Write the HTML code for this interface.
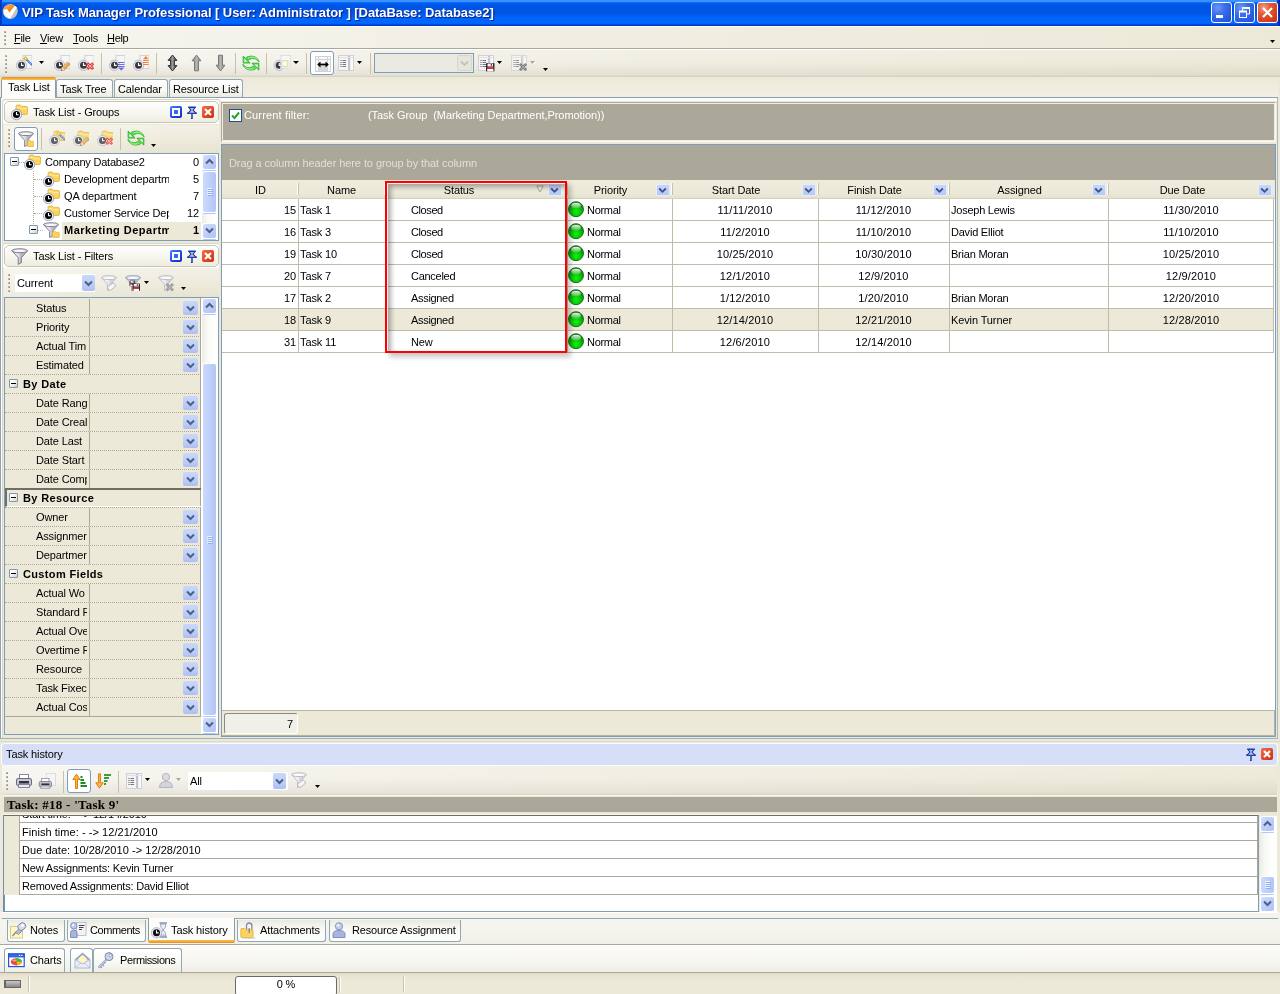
<!DOCTYPE html>
<html><head><meta charset="utf-8"><title>VIP Task Manager Professional</title>
<style>
html,body{margin:0;padding:0}
body{width:1280px;height:994px;overflow:hidden;background:#ECE9D8;font-family:"Liberation Sans",sans-serif;font-size:11px;color:#000;position:relative;letter-spacing:-.12px}
.a{position:absolute;box-sizing:border-box}
.t{position:absolute;white-space:pre;line-height:13px;height:13px}
.b{font-weight:bold;letter-spacing:.35px}
u{text-decoration:underline}
#app{position:absolute;left:0;top:0;width:1280px;height:994px;will-change:transform}
</style></head>
<body>
<div id="app">
<div class="a " style="left:0px;top:0px;width:1280px;height:26px;background:linear-gradient(180deg,#3b92ff 0px,#3b92ff 1.5px,#0069ff 2.6px,#0259ea 4px,#0055e2 6px,#0055e4 13px,#0066fc 18px,#0068ff 23px,#005cf0 24px,#003ad0 25px,#0036c8 26px)"></div>
<div class="a " style="left:0px;top:0px;width:2px;height:26px;background:linear-gradient(90deg,#0030b0,#0048d8)"></div>
<div class="a " style="left:1277px;top:0px;width:3px;height:26px;background:linear-gradient(90deg,#0048d8,#001c98)"></div>
<svg class="a" style="left:2px;top:3px" width="17" height="17" viewBox="0 0 17 17"><defs><linearGradient id="og" x1="0" y1="0" x2="1" y2="1"><stop offset="0" stop-color="#ffffff"/><stop offset=".55" stop-color="#f0f0f0"/><stop offset="1" stop-color="#a8a8a8"/></linearGradient><linearGradient id="oo" x1="0" y1="0" x2=".6" y2="1"><stop offset="0" stop-color="#ffb050"/><stop offset="1" stop-color="#e87808"/></linearGradient></defs><circle cx="8.200" cy="8.500" r="7.100" fill="url(#og)" stroke="#e8c8a0" stroke-width=".6"/><path d="M1.500 6.500q1.200-4.300 6-5.100 3.400-.3 5.400 1.800l-5.600 7.200-2.300-3.600z" fill="url(#oo)"/><path d="M1.800 7.400l3.100-1.600 2.500 3.600 5.500-6.600 2.200 2-6.900 10.600h-1.400z" fill="#fff"/><path d="M8.200 15.400l6.900-10.600.4 3.500-5 7.100z" fill="#c4c4c4"/></svg>
<div class="t" style="left:22px;top:5px;font-size:13px;font-weight:bold;color:#fff;line-height:16px;height:16px;text-shadow:1px 1px 1px #0a1c80;letter-spacing:-.075px" id="title">VIP Task Manager Professional [ User: Administrator ] [DataBase: Database2]</div>
<div class="a " style="left:1211px;top:2px;width:21px;height:21px;background:radial-gradient(circle at 30% 25%,#6a98f8 0%,#3c70ec 35%,#2a5ce0 70%,#2450d0 100%);border:1px solid #fff;border-radius:3px"></div>
<div class="a " style="left:1216px;top:15px;width:7px;height:3px;background:#fff"></div>
<div class="a " style="left:1234px;top:2px;width:21px;height:21px;background:radial-gradient(circle at 30% 25%,#6a98f8 0%,#3c70ec 35%,#2a5ce0 70%,#2450d0 100%);border:1px solid #fff;border-radius:3px"></div>
<svg class="a" style="left:1234px;top:2px" width="21" height="21" viewBox="0 0 21 21"><g fill="none" stroke="#fff"><path d="M8.5 8.5v-2.5h7v6h-2.5" stroke-width="1"/><path d="M8 6h8" stroke-width="2"/><rect x="5.5" y="9.5" width="7" height="6" stroke-width="1"/><path d="M5 9.5h8" stroke-width="2"/></g></svg>
<div class="a " style="left:1257px;top:2px;width:21px;height:21px;background:radial-gradient(circle at 30% 25%,#f0a080 0%,#e0583a 35%,#d8401c 70%,#c03010 100%);border:1px solid #fff;border-radius:3px"></div>
<svg class="a" style="left:1257px;top:2px" width="21" height="21" viewBox="0 0 21 21"><path d="M6 6l9 9M15 6l-9 9" stroke="#fff" stroke-width="2.2" stroke-linecap="butt"/></svg>
<div class="a " style="left:0px;top:26px;width:1280px;height:22px;background:linear-gradient(90deg,#f6f5ef 0%,#f1efe4 40%,#ece9d8 100%)"></div>
<div class="a " style="left:0px;top:26px;width:1280px;height:1px;background:#fffdf2"></div>
<div class="a " style="left:0px;top:48px;width:1280px;height:1px;background:#aca899"></div>
<div class="a " style="left:0px;top:49px;width:1280px;height:1px;background:#fff"></div>
<div class="a " style="left:4px;top:31px;width:2px;height:2px;background:#b8b4a0"></div>
<div class="a " style="left:5px;top:32px;width:1px;height:1px;background:#8c8874"></div>
<div class="a " style="left:4px;top:35px;width:2px;height:2px;background:#b8b4a0"></div>
<div class="a " style="left:5px;top:36px;width:1px;height:1px;background:#8c8874"></div>
<div class="a " style="left:4px;top:39px;width:2px;height:2px;background:#b8b4a0"></div>
<div class="a " style="left:5px;top:40px;width:1px;height:1px;background:#8c8874"></div>
<div class="a " style="left:4px;top:43px;width:2px;height:2px;background:#b8b4a0"></div>
<div class="a " style="left:5px;top:44px;width:1px;height:1px;background:#8c8874"></div>
<div class="t " style="left:14px;top:32px;letter-spacing:-0.3px;"><u>F</u>ile</div>
<div class="t " style="left:40px;top:32px;"><u>V</u>iew</div>
<div class="t " style="left:73px;top:32px;"><u>T</u>ools</div>
<div class="t " style="left:107px;top:32px;letter-spacing:-0.3px;"><u>H</u>elp</div>
<svg class="a" style="left:1270px;top:40px" width="5" height="3" viewBox="0 0 5 3"><path d="M0 0h5l-2.500 3z" fill="#000"/></svg>
<div class="a " style="left:0px;top:50px;width:1280px;height:27px;background:linear-gradient(180deg,rgba(255,255,255,.12) 0%,rgba(255,255,255,0) 45%,rgba(160,155,130,.16) 92%,rgba(160,155,130,.38) 100%),linear-gradient(90deg,#f6f5f0 0%,#f2f0e6 35%,#ece9d8 100%)"></div>
<div class="a " style="left:5px;top:55px;width:2px;height:2px;background:#b8b4a0"></div>
<div class="a " style="left:6px;top:56px;width:1px;height:1px;background:#8c8874"></div>
<div class="a " style="left:5px;top:59px;width:2px;height:2px;background:#b8b4a0"></div>
<div class="a " style="left:6px;top:60px;width:1px;height:1px;background:#8c8874"></div>
<div class="a " style="left:5px;top:63px;width:2px;height:2px;background:#b8b4a0"></div>
<div class="a " style="left:6px;top:64px;width:1px;height:1px;background:#8c8874"></div>
<div class="a " style="left:5px;top:67px;width:2px;height:2px;background:#b8b4a0"></div>
<div class="a " style="left:6px;top:68px;width:1px;height:1px;background:#8c8874"></div>
<div class="a " style="left:5px;top:71px;width:2px;height:2px;background:#b8b4a0"></div>
<div class="a " style="left:6px;top:72px;width:1px;height:1px;background:#8c8874"></div>
<svg class="a" style="left:16px;top:55px" width="16" height="16" viewBox="0 0 16 16"><rect x="7.5" y="1.0" width="9" height="13" fill="#dcdce0"/><rect x="7" y="0.5" width="9" height="13" fill="#f6f6f7" stroke="#d2d2da" stroke-width="1"/><circle cx="5.5" cy="10.3" r="5.2" fill="#e8e8f2" stroke="#b0b0c6" stroke-width=".8"/><circle cx="5.5" cy="10.3" r="3.5" fill="#38383c"/><path d="M5.5 7.800000000000001V10.4H7.7" stroke="#fff" stroke-width="1.1" fill="none"/><path d="M11 5l4.600 4.600" stroke="#3c78e0" stroke-width="1.900" stroke-linecap="round"/><path d="M11.400 5.400l3.800 3.800" stroke="#a8c8f8" stroke-width=".6"/><path d="M9.500 1.200v4.600M7.200 3.500h4.600M7.900 1.900l3.200 3.200M11.100 1.900l-3.200 3.200" stroke="#e0b010" stroke-width="1"/><rect x="8.700" y="2.700" width="1.600" height="1.600" fill="#fff8c0"/></svg>
<svg class="a" style="left:39px;top:61px" width="5" height="3" viewBox="0 0 5 3"><path d="M0 0h5l-2.500 3z" fill="#000"/></svg>
<svg class="a" style="left:54px;top:55px" width="16" height="16" viewBox="0 0 16 16"><rect x="7.5" y="1.0" width="9" height="13" fill="#dcdce0"/><rect x="7" y="0.5" width="9" height="13" fill="#f6f6f7" stroke="#d2d2da" stroke-width="1"/><circle cx="5.5" cy="10.3" r="5.2" fill="#e8e8f2" stroke="#b0b0c6" stroke-width=".8"/><circle cx="5.5" cy="10.3" r="3.5" fill="#38383c"/><path d="M5.5 7.800000000000001V10.4H7.7" stroke="#fff" stroke-width="1.1" fill="none"/><path d="M7.300 15.600l.9-3.300 5.400-5.400 2.400 2.400-5.400 5.400z" fill="#e2aa58" stroke="#b07828" stroke-width=".7"/><path d="M8.900 12.500l5.200-5.200" stroke="#f4d49c" stroke-width=".9"/><path d="M7.300 15.600l.9-3.300 2.400 2.400z" fill="#f6e4c4"/><path d="M7.300 15.600l.4-1.400 1 1z" fill="#222"/></svg>
<svg class="a" style="left:78px;top:55px" width="16" height="16" viewBox="0 0 16 16"><rect x="7.5" y="1.0" width="9" height="13" fill="#dcdce0"/><rect x="7" y="0.5" width="9" height="13" fill="#f6f6f7" stroke="#d2d2da" stroke-width="1"/><circle cx="5.5" cy="10.3" r="5.2" fill="#e8e8f2" stroke="#b0b0c6" stroke-width=".8"/><circle cx="5.5" cy="10.3" r="3.5" fill="#38383c"/><path d="M5.5 7.800000000000001V10.4H7.7" stroke="#fff" stroke-width="1.1" fill="none"/><path d="M9.300 8.300l5.800 5.800M15.100 8.300l-5.800 5.800" stroke="#e83a30" stroke-width="2.800"/><path d="M10.200 9.200l4 4M14.200 9.200l-4 4" stroke="#ffd8d4" stroke-width=".9"/></svg>
<div class="a " style="left:101px;top:53px;width:1px;height:21px;background:#c5c2a8"></div>
<svg class="a" style="left:109px;top:55px" width="16" height="16" viewBox="0 0 16 16"><rect x="7.5" y="1.0" width="9" height="13" fill="#dcdce0"/><rect x="7" y="0.5" width="9" height="13" fill="#f6f6f7" stroke="#d2d2da" stroke-width="1"/><circle cx="5.5" cy="10.3" r="5.2" fill="#e8e8f2" stroke="#b0b0c6" stroke-width=".8"/><circle cx="5.5" cy="10.3" r="3.5" fill="#38383c"/><path d="M5.5 7.800000000000001V10.4H7.7" stroke="#fff" stroke-width="1.1" fill="none"/><path d="M9 7.500h6.500M9 9.500h6.500M9 11.500h6.500" stroke="#6c6ce8" stroke-width="1"/><path d="M9.500 12.500h5.500l-2.750 3.200z" fill="#6c6ce8"/></svg>
<svg class="a" style="left:133px;top:55px" width="16" height="16" viewBox="0 0 16 16"><rect x="7.5" y="1.0" width="9" height="13" fill="#dcdce0"/><rect x="7" y="0.5" width="9" height="13" fill="#f6f6f7" stroke="#d2d2da" stroke-width="1"/><circle cx="5.5" cy="10.3" r="5.2" fill="#e8e8f2" stroke="#b0b0c6" stroke-width=".8"/><circle cx="5.5" cy="10.3" r="3.5" fill="#38383c"/><path d="M5.5 7.800000000000001V10.4H7.7" stroke="#fff" stroke-width="1.1" fill="none"/><path d="M10 4.300h5.600l-2.800-3.300z" fill="#f4823a"/><path d="M10 5.500h5.600M10 7.500h5.600M10 9.500h5.600" stroke="#f4823a" stroke-width="1"/></svg>
<div class="a " style="left:156px;top:53px;width:1px;height:21px;background:#c5c2a8"></div>
<svg width="0" height="0" style="position:absolute"><defs><linearGradient id="ad" x1="0" x2="1"><stop offset="0" stop-color="#3a3a3a"/><stop offset=".5" stop-color="#9a9a9a"/><stop offset="1" stop-color="#3a3a3a"/></linearGradient><linearGradient id="ag" x1="0" x2="1"><stop offset="0" stop-color="#8a8a8a"/><stop offset=".5" stop-color="#b4b4b4"/><stop offset="1" stop-color="#8a8a8a"/></linearGradient></defs></svg>
<svg class="a" style="left:166px;top:54px" width="13" height="18" viewBox="0 0 13 18"><path d="M6.500 1l4.400 5.400h-2.500v5.200h2.500L6.500 17 2.100 11.600h2.500V6.400H2.100z" fill="url(#ad)" stroke="#1e1e1e" stroke-width=".9" stroke-linejoin="round"/></svg>
<svg class="a" style="left:190px;top:54px" width="13" height="18" viewBox="0 0 13 18"><path d="M6.500 1l4.400 5.800h-2.400v10H4.500v-10H2.100z" fill="url(#ag)" stroke="#6e6e6e" stroke-width=".9" stroke-linejoin="round"/></svg>
<svg class="a" style="left:214px;top:54px" width="13" height="18" viewBox="0 0 13 18"><path d="M6.500 17l4.400-5.800h-2.400v-10H4.500v10H2.100z" fill="url(#ag)" stroke="#6e6e6e" stroke-width=".9" stroke-linejoin="round"/></svg>
<div class="a " style="left:235px;top:53px;width:1px;height:21px;background:#c5c2a8"></div>
<svg class="a" style="left:242px;top:54px" width="18" height="18" viewBox="0 0 17 17"><g transform="translate(.5 .6)"><path d="M15.700 7C14.600 2.300 9 -.4 3.400 2.700L5.600 5.300C9 2.600 13.200 3.400 15.700 7z" fill="#58dc4c" stroke="#3aae3a" stroke-width=".8" stroke-linejoin="round"/><path d="M5.400 3.300C8.600 1.600 12 2.200 14 4.400" stroke="#a4ff8c" stroke-width=".9" fill="none"/><path d="M.6 1.400V7.900H7.200z" fill="#58dc4c" stroke="#3aae3a" stroke-width=".9" stroke-linejoin="round"/><path d="M1.700 3.800V6.800H4.700z" fill="#f0fff0"/><g transform="rotate(180 8 8)"><path d="M15.700 7C14.600 2.300 9 -.4 3.400 2.700L5.600 5.300C9 2.600 13.200 3.400 15.700 7z" fill="#58dc4c" stroke="#3aae3a" stroke-width=".8" stroke-linejoin="round"/><path d="M5.400 3.300C8.600 1.600 12 2.200 14 4.400" stroke="#a4ff8c" stroke-width=".9" fill="none"/><path d="M.6 1.400V7.900H7.200z" fill="#58dc4c" stroke="#3aae3a" stroke-width=".9" stroke-linejoin="round"/><path d="M1.700 3.800V6.800H4.700z" fill="#f0fff0"/></g></g></svg>
<div class="a " style="left:266px;top:53px;width:1px;height:21px;background:#c5c2a8"></div>
<svg class="a" style="left:273px;top:55px" width="18" height="16" viewBox="0 0 18 16"><circle cx="6.2" cy="10.3" r="5.2" fill="#e8e8f2" stroke="#b0b0c6" stroke-width=".8"/><circle cx="6.2" cy="10.3" r="3.5" fill="#38383c"/><path d="M6.2 7.800000000000001V10.4H8.4" stroke="#fff" stroke-width="1.1" fill="none"/><rect x="7.800" y=".5" width="9.500" height="13" fill="#f6f6f7" stroke="#dedee4" stroke-width="1"/><rect x="8.800" y="5.700" width="6" height="6" fill="#fffbd8" stroke="#d8d4b8" stroke-width="1"/></svg>
<svg class="a" style="left:293px;top:61px" width="6" height="3" viewBox="0 0 6 3"><path d="M0 0h6l-3 3z" fill="#000"/></svg>
<div class="a " style="left:306px;top:53px;width:1px;height:21px;background:#c5c2a8"></div>
<div class="a " style="left:310px;top:51px;width:24px;height:24px;background:#fff;border:1px solid #7f9db9;border-radius:3px"></div>
<svg class="a" style="left:314px;top:55px" width="17" height="17" viewBox="0 0 17 17"><rect x="1.500" y="1.500" width="15" height="15" fill="#fafafb" stroke="#d0d0d6"/><rect x="5" y="8" width="8" height="8" fill="#d8d8dc"/><path d="M1.500 4.500h15M4.500 1.500v15M13.500 1.500v15" stroke="#d0d0d6"/><path d="M4.500 9.500h9" stroke="#000" stroke-width="1.600"/><path d="M3.200 9.500l3.300-3v6zM14.800 9.500l-3.300-3v6z" fill="#000"/></svg>
<svg class="a" style="left:338px;top:55px" width="16" height="16" viewBox="0 0 16 16"><rect x=".5" y=".5" width="15" height="15" fill="#f4f4f6" stroke="#d0d0d6"/><rect x="10" y="1" width="2.500" height="14" fill="#c4c4cc"/><rect x="12.500" y="1" width="2.500" height="14" fill="#fbfbfc"/><path d="M1 2.500h14" stroke="#e0e0e6"/><path d="M2.500 5.500h1M2.500 7.500h1M2.500 9.500h1M2.500 11.500h1" stroke="#555"/><path d="M4.500 5.500h3.500M4.500 7.500h3.500M4.500 9.500h3.500M4.500 11.500h3.500" stroke="#777"/></svg>
<svg class="a" style="left:357px;top:61px" width="5" height="3" viewBox="0 0 5 3"><path d="M0 0h5l-2.500 3z" fill="#000"/></svg>
<div class="a " style="left:370px;top:53px;width:1px;height:21px;background:#c5c2a8"></div>
<div class="a " style="left:374px;top:53px;width:100px;height:20px;background:#ebeae2;border:1px solid #7f9db9"></div>
<div class="a " style="left:457px;top:55px;width:15px;height:16px;background:#e6e5dc;border:1px solid #d8d6cc;border-radius:2px"></div>
<svg class="a" style="left:460px;top:60px" width="9" height="7" viewBox="0 0 9 7"><path d="M1 1.500l3.500 3.500 3.500-3.500" stroke="#c4c2b6" stroke-width="1.800" fill="none"/></svg>
<svg class="a" style="left:478px;top:55px" width="17" height="17" viewBox="0 0 17 17"><rect x=".5" y=".5" width="15" height="15" fill="#f4f4f6" stroke="#d0d0d6"/><rect x="10" y="1" width="2.500" height="14" fill="#c4c4cc"/><rect x="12.500" y="1" width="2.500" height="14" fill="#fbfbfc"/><path d="M1 2.500h14" stroke="#e0e0e6"/><path d="M2.500 5.500h1M2.500 7.500h1M2.500 9.500h1M2.500 11.500h1" stroke="#555"/><path d="M4.500 5.500h3.500M4.500 7.500h3.500M4.500 9.500h3.500M4.500 11.500h3.500" stroke="#777"/><rect x="8" y="8" width="8.500" height="8.500" rx=".8" fill="#2c2c30"/><rect x="9.500" y="8.500" width="5.500" height="3" fill="#f4f4f8"/><rect x="12.800" y="8.900" width="1.200" height="2" fill="#445"/><rect x="9.200" y="12" width="6.200" height="2" fill="#e83030"/><rect x="9.200" y="14" width="6.200" height="2.500" fill="#fff"/></svg>
<svg class="a" style="left:497px;top:61px" width="5" height="3" viewBox="0 0 5 3"><path d="M0 0h5l-2.500 3z" fill="#000"/></svg>
<svg class="a" style="left:511px;top:55px" width="17" height="17" viewBox="0 0 17 17"><g opacity=".75"><rect x=".5" y=".5" width="15" height="15" fill="#f4f4f6" stroke="#d0d0d6"/><rect x="10" y="1" width="2.500" height="14" fill="#c4c4cc"/><rect x="12.500" y="1" width="2.500" height="14" fill="#fbfbfc"/><path d="M1 2.500h14" stroke="#e0e0e6"/><path d="M2.500 5.500h1M2.500 7.500h1M2.500 9.500h1M2.500 11.500h1" stroke="#555"/><path d="M4.500 5.500h3.500M4.500 7.500h3.500M4.500 9.500h3.500M4.500 11.500h3.500" stroke="#777"/></g><path d="M8.800 8.800l6.400 6.400M15.200 8.800l-6.400 6.400" stroke="#808084" stroke-width="2.600"/><path d="M9.800 9.800l4.400 4.400M14.200 9.800l-4.400 4.400" stroke="#b4b4b8" stroke-width=".8"/></svg>
<svg class="a" style="left:530px;top:61px" width="6" height="4" viewBox="0 0 6 4"><path d="M1 1h5l-2.500 3z" fill="#fff"/><path d="M0 0h5l-2.500 3z" fill="#aca899"/></svg>
<svg class="a" style="left:543px;top:68px" width="5" height="3" viewBox="0 0 5 3"><path d="M0 0h5l-2.500 3z" fill="#000"/></svg>
<div class="a " style="left:0px;top:77px;width:1280px;height:21px;background:linear-gradient(180deg,#ece9d8,#f2f0e6)"></div>
<div class="a " style="left:0px;top:97px;width:1278px;height:1px;background:#8ca0b0"></div>
<div class="a " style="left:0px;top:98px;width:1280px;height:3px;background:#fbfbf9"></div>
<div class="a " style="left:56px;top:79px;width:57px;height:18px;background:linear-gradient(180deg,#ffffff 0%,#f8f8f4 60%,#ebeae0 100%);border:1px solid #91a7b4;border-bottom:none;border-radius:3px 3px 0 0"></div>
<div class="t " style="left:60px;top:83px;">Task Tree</div>
<div class="a " style="left:114px;top:79px;width:54px;height:18px;background:linear-gradient(180deg,#ffffff 0%,#f8f8f4 60%,#ebeae0 100%);border:1px solid #91a7b4;border-bottom:none;border-radius:3px 3px 0 0"></div>
<div class="t " style="left:118px;top:83px;">Calendar</div>
<div class="a " style="left:169px;top:79px;width:74px;height:18px;background:linear-gradient(180deg,#ffffff 0%,#f8f8f4 60%,#ebeae0 100%);border:1px solid #91a7b4;border-bottom:none;border-radius:3px 3px 0 0"></div>
<div class="t " style="left:173px;top:83px;">Resource List</div>
<div class="a " style="left:1px;top:77px;width:55px;height:21px;background:#fcfcfa;border:1px solid #919b9c;border-bottom:none;border-radius:3px 3px 0 0"></div>
<div class="a " style="left:1px;top:77px;width:55px;height:3px;background:linear-gradient(180deg,#e68b2c,#ffc73c);border-radius:3px 3px 0 0"></div>
<div class="t " style="left:8px;top:81px;">Task List</div>
<div class="a " style="left:0px;top:101px;width:222px;height:640px;background:#ece9d8"></div>
<div class="a " style="left:0px;top:98px;width:1px;height:641px;background:#8ca0b0"></div>
<div class="a " style="left:1px;top:98px;width:1px;height:640px;background:#fff"></div>
<svg width="0" height="0" style="position:absolute"><defs><linearGradient id="dh" x1="0" y1="0" x2="0" y2="1"><stop offset="0" stop-color="#ffffff"/><stop offset=".5" stop-color="#f8f7f1"/><stop offset="1" stop-color="#eeecdf"/></linearGradient></defs></svg>
<div class="a " style="left:2px;top:99px;width:219px;height:144px;border:1px solid #d8d6c6;border-bottom:none;border-radius:4px 4px 0 0;background:#fbfbf8"></div>
<div class="a " style="left:3px;top:124px;width:217px;height:119px;background:#ece9d8"></div>
<svg class="a" style="left:2px;top:100px" width="219" height="25" viewBox="0 0 219 25"><path d="M5.500 1.500h208l3 3v15l-3 3h-208l-3-3v-15z" fill="none" stroke="#fbfbf8" stroke-width="2"/><path d="M5.500 1.500h208l3 3v15l-3 3h-208l-3-3v-15z" fill="url(#dh)" stroke="#c9c7b4" stroke-width="1"/></svg>
<svg class="a" style="left:11px;top:104px" width="18" height="17" viewBox="0 0 18 17"><g opacity="1"><path d="M5 2.5q0-1.500 1.500-1.500h2.800l1.400 1.400h4.300q1.500 0 1.500 1.500v5.100q0 1.500-1.500 1.500h-8.500q-1.500 0-1.500-1.500z" fill="#fbd35a" stroke="#e2ae38" stroke-width=".8"/><path d="M5.8 3.6h3.200l1.200 1.200h5.600" stroke="#fff0b0" stroke-width="1" fill="none"/></g><circle cx="5.5" cy="10.6" r="5.2" fill="#e8e8f2" stroke="#8c94b4" stroke-width=".8"/><circle cx="5.5" cy="10.6" r="3.5" fill="#000"/><path d="M5.5 8.1V10.7H7.7" stroke="#fff" stroke-width="1.1" fill="none"/></svg>
<div class="t " style="left:33px;top:106px;">Task List - Groups</div>
<div class="a " style="left:170px;top:106px;width:12px;height:12px;background:linear-gradient(135deg,#4a7cf8 0%,#1c48e0 60%,#0a30c8 100%);border-radius:2px"></div>
<div class="a " style="left:172px;top:108px;width:8px;height:8px;border:2px solid #fff;background:#3a68ec"></div>
<svg class="a" style="left:186px;top:106px" width="12" height="13" viewBox="0 0 12 13"><path d="M2.200 1.200h7.600M1.200 7.200h9.600" stroke="#1c3ca0" stroke-width="1.400"/><path d="M3 1.500l2 2.700-3 3h8l-3-3 2-2.700z" fill="#b8c4ec" stroke="#1c3ca0" stroke-width="1.100" stroke-linejoin="round"/><path d="M6 7.500v5l-1 .3" stroke="#1c3ca0" stroke-width="1.500" fill="none"/></svg>
<div class="a " style="left:202px;top:106px;width:12px;height:12px;background:linear-gradient(135deg,#ec7050 0%,#e04820 55%,#cc3008 100%);border-radius:2px"></div>
<svg class="a" style="left:202px;top:106px" width="12" height="12" viewBox="0 0 12 12"><path d="M3 3l6 6M9 3l-6 6" stroke="#fff" stroke-width="2.200"/></svg>
<div class="a " style="left:4px;top:125px;width:215px;height:28px;background:linear-gradient(90deg,rgba(255,255,255,.35) 0%,rgba(255,255,255,0) 80%),linear-gradient(180deg,#f3f1e7 0%,#eeebdd 50%,#e6e3d0 100%)"></div>
<div class="a " style="left:8px;top:129px;width:2px;height:2px;background:#b8b4a0"></div>
<div class="a " style="left:9px;top:130px;width:1px;height:1px;background:#8c8874"></div>
<div class="a " style="left:8px;top:133px;width:2px;height:2px;background:#b8b4a0"></div>
<div class="a " style="left:9px;top:134px;width:1px;height:1px;background:#8c8874"></div>
<div class="a " style="left:8px;top:137px;width:2px;height:2px;background:#b8b4a0"></div>
<div class="a " style="left:9px;top:138px;width:1px;height:1px;background:#8c8874"></div>
<div class="a " style="left:8px;top:141px;width:2px;height:2px;background:#b8b4a0"></div>
<div class="a " style="left:9px;top:142px;width:1px;height:1px;background:#8c8874"></div>
<div class="a " style="left:8px;top:145px;width:2px;height:2px;background:#b8b4a0"></div>
<div class="a " style="left:9px;top:146px;width:1px;height:1px;background:#8c8874"></div>
<div class="a " style="left:14px;top:127px;width:24px;height:24px;background:#fff;border:1px solid #7f9db9;border-radius:3px"></div>
<svg class="a" style="left:18px;top:131px" width="16" height="16" viewBox="0 0 16 16"><g transform="translate(0 0) scale(1)"><defs><linearGradient id="fg1" x1="0" x2="1"><stop offset="0" stop-color="#fff"/><stop offset=".45" stop-color="#dcdce6"/><stop offset=".7" stop-color="#787888" stop-opacity=".55"/><stop offset="1" stop-color="#fff"/></linearGradient></defs><path d="M.6 2.600Q8 6 15.400 2.600L9.600 9.300v4.700L6.600 15.600V9.300z" fill="url(#fg1)" stroke="#787888" stroke-width=".9" stroke-linejoin="round"/><ellipse cx="8" cy="2.600" rx="7.400" ry="1.900" fill="#dcdce6" stroke="#787888" stroke-width=".9"/><ellipse cx="8" cy="2.900" rx="5.400" ry="1" fill="#fff" opacity=".8"/></g><path d="M9.500 10.300q0-.8.800-.8h1.800l.9.900h2.500q.8 0 .8.800v3.500q0 .8-.8.800h-5.200q-.8 0-.8-.8z" fill="#fbd35a" stroke="#e2ae38" stroke-width=".7"/></svg>
<div class="a " style="left:41px;top:128px;width:1px;height:22px;background:#c5c2a8"></div>
<svg class="a" style="left:49px;top:130px" width="16" height="16" viewBox="0 0 16 16"><g opacity=".8"><g opacity="1"><path d="M5 2.5q0-1.500 1.500-1.500h2.800l1.400 1.400h4.300q1.500 0 1.500 1.500v5.100q0 1.500-1.500 1.500h-8.500q-1.500 0-1.500-1.500z" fill="#fbd35a" stroke="#e2ae38" stroke-width=".8"/><path d="M5.8 3.6h3.200l1.200 1.200h5.600" stroke="#fff0b0" stroke-width="1" fill="none"/></g><circle cx="5.5" cy="10.6" r="5.2" fill="#e8e8f2" stroke="#b0b0c6" stroke-width=".8"/><circle cx="5.5" cy="10.6" r="3.5" fill="#38383c"/><path d="M5.5 8.1V10.7H7.7" stroke="#fff" stroke-width="1.1" fill="none"/><path d="M11 5l4.600 4.600" stroke="#3c78e0" stroke-width="1.900" stroke-linecap="round"/><path d="M11.400 5.400l3.800 3.800" stroke="#a8c8f8" stroke-width=".6"/><path d="M9.500 1.200v4.600M7.200 3.500h4.600M7.900 1.900l3.200 3.200M11.100 1.900l-3.200 3.200" stroke="#e0b010" stroke-width="1"/><rect x="8.700" y="2.700" width="1.600" height="1.600" fill="#fff8c0"/></g></svg>
<svg class="a" style="left:73px;top:130px" width="16" height="16" viewBox="0 0 16 16"><g opacity=".8"><g opacity="1"><path d="M5 2.5q0-1.500 1.500-1.500h2.800l1.400 1.400h4.300q1.500 0 1.500 1.500v5.100q0 1.500-1.500 1.500h-8.500q-1.500 0-1.500-1.500z" fill="#fbd35a" stroke="#e2ae38" stroke-width=".8"/><path d="M5.8 3.6h3.200l1.200 1.200h5.600" stroke="#fff0b0" stroke-width="1" fill="none"/></g><circle cx="5.5" cy="10.6" r="5.2" fill="#e8e8f2" stroke="#b0b0c6" stroke-width=".8"/><circle cx="5.5" cy="10.6" r="3.5" fill="#38383c"/><path d="M5.5 8.1V10.7H7.7" stroke="#fff" stroke-width="1.1" fill="none"/><path d="M7.300 15.600l.9-3.300 5.400-5.400 2.400 2.400-5.400 5.400z" fill="#e2aa58" stroke="#b07828" stroke-width=".7"/><path d="M8.900 12.500l5.200-5.200" stroke="#f4d49c" stroke-width=".9"/><path d="M7.300 15.600l.9-3.300 2.400 2.400z" fill="#f6e4c4"/><path d="M7.300 15.600l.4-1.400 1 1z" fill="#222"/></g></svg>
<svg class="a" style="left:97px;top:130px" width="16" height="16" viewBox="0 0 16 16"><g opacity=".8"><g opacity="1"><path d="M5 2.5q0-1.500 1.500-1.500h2.800l1.400 1.400h4.300q1.500 0 1.500 1.500v5.100q0 1.500-1.500 1.500h-8.500q-1.500 0-1.500-1.500z" fill="#fbd35a" stroke="#e2ae38" stroke-width=".8"/><path d="M5.8 3.6h3.200l1.200 1.200h5.600" stroke="#fff0b0" stroke-width="1" fill="none"/></g><circle cx="5.5" cy="10.6" r="5.2" fill="#e8e8f2" stroke="#b0b0c6" stroke-width=".8"/><circle cx="5.5" cy="10.6" r="3.5" fill="#38383c"/><path d="M5.5 8.1V10.7H7.7" stroke="#fff" stroke-width="1.1" fill="none"/><path d="M9.300 8.300l5.800 5.800M15.100 8.300l-5.800 5.800" stroke="#e83a30" stroke-width="2.800"/><path d="M10.200 9.200l4 4M14.200 9.200l-4 4" stroke="#ffd8d4" stroke-width=".9"/></g></svg>
<div class="a " style="left:120px;top:128px;width:1px;height:22px;background:#c5c2a8"></div>
<svg class="a" style="left:127px;top:129px" width="18" height="18" viewBox="0 0 17 17"><g transform="translate(.5 .6)"><path d="M15.700 7C14.600 2.300 9 -.4 3.400 2.700L5.600 5.300C9 2.600 13.200 3.400 15.700 7z" fill="#58dc4c" stroke="#3aae3a" stroke-width=".8" stroke-linejoin="round"/><path d="M5.400 3.300C8.600 1.600 12 2.200 14 4.400" stroke="#a4ff8c" stroke-width=".9" fill="none"/><path d="M.6 1.400V7.900H7.200z" fill="#58dc4c" stroke="#3aae3a" stroke-width=".9" stroke-linejoin="round"/><path d="M1.700 3.800V6.800H4.700z" fill="#f0fff0"/><g transform="rotate(180 8 8)"><path d="M15.700 7C14.600 2.300 9 -.4 3.400 2.700L5.600 5.300C9 2.600 13.200 3.400 15.700 7z" fill="#58dc4c" stroke="#3aae3a" stroke-width=".8" stroke-linejoin="round"/><path d="M5.400 3.300C8.600 1.600 12 2.200 14 4.400" stroke="#a4ff8c" stroke-width=".9" fill="none"/><path d="M.6 1.400V7.900H7.200z" fill="#58dc4c" stroke="#3aae3a" stroke-width=".9" stroke-linejoin="round"/><path d="M1.700 3.800V6.800H4.700z" fill="#f0fff0"/></g></g></svg>
<svg class="a" style="left:151px;top:144px" width="5" height="3" viewBox="0 0 5 3"><path d="M0 0h5l-2.500 3z" fill="#000"/></svg>
<div class="a " style="left:4px;top:153px;width:215px;height:88px;background:#fff;border:1px solid #7f9db9"></div>
<div class="a " style="left:33px;top:171px;width:1px;height:55px;border-left:1px dotted #b4ae98"></div>
<div class="a " style="left:34px;top:179px;width:8px;height:1px;border-top:1px dotted #b4ae98"></div>
<div class="a " style="left:34px;top:196px;width:8px;height:1px;border-top:1px dotted #b4ae98"></div>
<div class="a " style="left:34px;top:213px;width:8px;height:1px;border-top:1px dotted #b4ae98"></div>
<div class="a " style="left:19px;top:162px;width:5px;height:1px;border-top:1px dotted #b4ae98"></div>
<div class="a " style="left:38px;top:230px;width:5px;height:1px;border-top:1px dotted #b4ae98"></div>
<div class="a " style="left:10px;top:157px;width:9px;height:9px;background:linear-gradient(135deg,#fff 30%,#d4d0c0);border:1px solid #7c96b4;border-radius:1px"></div>
<div class="a " style="left:12px;top:161px;width:5px;height:1px;background:#000"></div>
<svg class="a" style="left:24px;top:154px" width="17" height="16" viewBox="0 0 17 16"><g opacity="1"><path d="M5 2.5q0-1.500 1.500-1.500h2.800l1.400 1.400h4.300q1.500 0 1.500 1.500v5.100q0 1.500-1.500 1.500h-8.500q-1.500 0-1.500-1.500z" fill="#fbd35a" stroke="#e2ae38" stroke-width=".8"/><path d="M5.8 3.6h3.200l1.200 1.200h5.600" stroke="#fff0b0" stroke-width="1" fill="none"/></g><circle cx="5.5" cy="10.6" r="5.2" fill="#e8e8f2" stroke="#8c94b4" stroke-width=".8"/><circle cx="5.5" cy="10.6" r="3.5" fill="#000"/><path d="M5.5 8.1V10.7H7.7" stroke="#fff" stroke-width="1.1" fill="none"/></svg>
<div class="t " style="left:45px;top:156px;letter-spacing:-0.21px;">Company Database2</div>
<div class="t" style="right:1081px;top:156px;">0</div>
<svg class="a" style="left:43px;top:171px" width="17" height="16" viewBox="0 0 17 16"><g opacity="1"><path d="M5 2.5q0-1.500 1.500-1.500h2.800l1.400 1.400h4.300q1.500 0 1.500 1.500v5.100q0 1.500-1.500 1.500h-8.500q-1.500 0-1.500-1.500z" fill="#fbd35a" stroke="#e2ae38" stroke-width=".8"/><path d="M5.8 3.6h3.200l1.200 1.200h5.600" stroke="#fff0b0" stroke-width="1" fill="none"/></g><circle cx="5.5" cy="10.6" r="5.2" fill="#e8e8f2" stroke="#8c94b4" stroke-width=".8"/><circle cx="5.5" cy="10.6" r="3.5" fill="#000"/><path d="M5.5 8.1V10.7H7.7" stroke="#fff" stroke-width="1.1" fill="none"/></svg>
<div class="t" style="left:64px;top:173px;width:105px;overflow:hidden">Development departm</div>
<div class="t" style="right:1081px;top:173px;">5</div>
<svg class="a" style="left:43px;top:188px" width="17" height="16" viewBox="0 0 17 16"><g opacity="1"><path d="M5 2.5q0-1.500 1.500-1.500h2.800l1.400 1.400h4.300q1.500 0 1.500 1.500v5.100q0 1.500-1.500 1.500h-8.500q-1.500 0-1.500-1.500z" fill="#fbd35a" stroke="#e2ae38" stroke-width=".8"/><path d="M5.8 3.6h3.200l1.200 1.200h5.600" stroke="#fff0b0" stroke-width="1" fill="none"/></g><circle cx="5.5" cy="10.6" r="5.2" fill="#e8e8f2" stroke="#8c94b4" stroke-width=".8"/><circle cx="5.5" cy="10.6" r="3.5" fill="#000"/><path d="M5.5 8.1V10.7H7.7" stroke="#fff" stroke-width="1.1" fill="none"/></svg>
<div class="t" style="left:64px;top:190px;width:105px;overflow:hidden">QA department</div>
<div class="t" style="right:1081px;top:190px;">7</div>
<svg class="a" style="left:43px;top:205px" width="17" height="16" viewBox="0 0 17 16"><g opacity="1"><path d="M5 2.5q0-1.500 1.500-1.500h2.800l1.400 1.400h4.300q1.500 0 1.500 1.500v5.100q0 1.500-1.500 1.500h-8.500q-1.500 0-1.500-1.500z" fill="#fbd35a" stroke="#e2ae38" stroke-width=".8"/><path d="M5.8 3.6h3.200l1.200 1.200h5.600" stroke="#fff0b0" stroke-width="1" fill="none"/></g><circle cx="5.5" cy="10.6" r="5.2" fill="#e8e8f2" stroke="#8c94b4" stroke-width=".8"/><circle cx="5.5" cy="10.6" r="3.5" fill="#000"/><path d="M5.5 8.1V10.7H7.7" stroke="#fff" stroke-width="1.1" fill="none"/></svg>
<div class="t" style="left:64px;top:207px;width:105px;overflow:hidden">Customer Service Dep</div>
<div class="t" style="right:1081px;top:207px;">12</div>
<div class="a " style="left:62px;top:222px;width:139px;height:18px;background:#ece9d8"></div>
<div class="a " style="left:29px;top:225px;width:9px;height:9px;background:linear-gradient(135deg,#fff 30%,#d4d0c0);border:1px solid #7c96b4;border-radius:1px"></div>
<div class="a " style="left:31px;top:229px;width:5px;height:1px;background:#000"></div>
<svg class="a" style="left:43px;top:222px" width="17" height="16" viewBox="0 0 17 16"><g transform="translate(0 0) scale(1)"><defs><linearGradient id="fg2" x1="0" x2="1"><stop offset="0" stop-color="#fff"/><stop offset=".45" stop-color="#dcdce6"/><stop offset=".7" stop-color="#787888" stop-opacity=".55"/><stop offset="1" stop-color="#fff"/></linearGradient></defs><path d="M.6 2.600Q8 6 15.400 2.600L9.600 9.300v4.700L6.600 15.600V9.300z" fill="url(#fg2)" stroke="#787888" stroke-width=".9" stroke-linejoin="round"/><ellipse cx="8" cy="2.600" rx="7.400" ry="1.900" fill="#dcdce6" stroke="#787888" stroke-width=".9"/><ellipse cx="8" cy="2.900" rx="5.400" ry="1" fill="#fff" opacity=".8"/></g><path d="M9.500 10.300q0-.8.800-.8h1.800l.9.900h2.500q.8 0 .8.800v3.500q0 .8-.8.800h-5.200q-.8 0-.8-.8z" fill="#fbd35a" stroke="#e2ae38" stroke-width=".7"/></svg>
<div class="t b" style="left:64px;top:224px;width:105px;overflow:hidden;letter-spacing:.48px">Marketing Departm</div>
<div class="t" style="right:1081px;top:224px;font-weight:bold">1</div>
<div class="a " style="left:202px;top:154px;width:16px;height:86px;background:linear-gradient(90deg,#eeede5 0%,#f8f8f4 30%,#fefefc 70%,#fff 100%)"></div>
<div class="a " style="left:202px;top:154px;width:15px;height:17px;background:#fff;border-radius:3px"></div>
<div class="a " style="left:203px;top:155px;width:13px;height:14px;background:linear-gradient(135deg,#d2defc 0%,#c0d0fa 45%,#aec2f6 100%);border-radius:2px"></div>
<div class="a " style="left:203px;top:170px;width:13px;height:1px;background:#b4c8f6;border-radius:0 0 2px 2px"></div>
<svg class="a" style="left:205px;top:158px" width="9" height="7" viewBox="0 0 9 7"><path d="M1 5.500l3.500-3.500 3.500 3.500" stroke="#4d6185" stroke-width="2" fill="none"/></svg>
<div class="a " style="left:202px;top:171px;width:15px;height:43px;background:#fff;border-radius:3px"></div>
<div class="a " style="left:203px;top:172px;width:13px;height:40px;background:linear-gradient(90deg,#cbd9fc 0%,#c2d2fb 40%,#b3c5f5 100%);border-radius:2px"></div>
<div class="a " style="left:203px;top:213px;width:13px;height:1px;background:#b4c8f6;border-radius:0 0 2px 2px"></div>
<div class="a " style="left:207px;top:188px;width:5px;height:1px;background:#eef3fe"></div>
<div class="a " style="left:208px;top:189px;width:5px;height:1px;background:#8cb0f8"></div>
<div class="a " style="left:207px;top:190px;width:5px;height:1px;background:#eef3fe"></div>
<div class="a " style="left:208px;top:191px;width:5px;height:1px;background:#8cb0f8"></div>
<div class="a " style="left:207px;top:192px;width:5px;height:1px;background:#eef3fe"></div>
<div class="a " style="left:208px;top:193px;width:5px;height:1px;background:#8cb0f8"></div>
<div class="a " style="left:207px;top:194px;width:5px;height:1px;background:#eef3fe"></div>
<div class="a " style="left:208px;top:195px;width:5px;height:1px;background:#8cb0f8"></div>
<div class="a " style="left:202px;top:223px;width:15px;height:17px;background:#fff;border-radius:3px"></div>
<div class="a " style="left:203px;top:224px;width:13px;height:14px;background:linear-gradient(135deg,#d2defc 0%,#c0d0fa 45%,#aec2f6 100%);border-radius:2px"></div>
<div class="a " style="left:203px;top:239px;width:13px;height:1px;background:#b4c8f6;border-radius:0 0 2px 2px"></div>
<svg class="a" style="left:205px;top:227px" width="9" height="7" viewBox="0 0 9 7"><path d="M1 1.500l3.500 3.500 3.500-3.500" stroke="#4d6185" stroke-width="2" fill="none"/></svg>
<div class="a " style="left:2px;top:243px;width:219px;height:496px;border:1px solid #d8d6c6;border-bottom:none;border-radius:4px 4px 0 0;background:#fbfbf8"></div>
<div class="a " style="left:3px;top:268px;width:217px;height:471px;background:#ece9d8"></div>
<svg class="a" style="left:2px;top:244px" width="219" height="25" viewBox="0 0 219 25"><path d="M5.500 1.500h208l3 3v15l-3 3h-208l-3-3v-15z" fill="none" stroke="#fbfbf8" stroke-width="2"/><path d="M5.500 1.500h208l3 3v15l-3 3h-208l-3-3v-15z" fill="url(#dh)" stroke="#c9c7b4" stroke-width="1"/></svg>
<svg class="a" style="left:11px;top:248px" width="18" height="17" viewBox="0 0 18 17"><g transform="translate(0.3 0) scale(1.05)"><defs><linearGradient id="fg3" x1="0" x2="1"><stop offset="0" stop-color="#fff"/><stop offset=".45" stop-color="#dcdce6"/><stop offset=".7" stop-color="#787888" stop-opacity=".55"/><stop offset="1" stop-color="#fff"/></linearGradient></defs><path d="M.6 2.600Q8 6 15.400 2.600L9.600 9.300v4.700L6.600 15.600V9.300z" fill="url(#fg3)" stroke="#787888" stroke-width=".9" stroke-linejoin="round"/><ellipse cx="8" cy="2.600" rx="7.400" ry="1.900" fill="#dcdce6" stroke="#787888" stroke-width=".9"/><ellipse cx="8" cy="2.900" rx="5.400" ry="1" fill="#fff" opacity=".8"/></g></svg>
<div class="t " style="left:33px;top:250px;">Task List - Filters</div>
<div class="a " style="left:170px;top:250px;width:12px;height:12px;background:linear-gradient(135deg,#4a7cf8 0%,#1c48e0 60%,#0a30c8 100%);border-radius:2px"></div>
<div class="a " style="left:172px;top:252px;width:8px;height:8px;border:2px solid #fff;background:#3a68ec"></div>
<svg class="a" style="left:186px;top:250px" width="12" height="13" viewBox="0 0 12 13"><path d="M2.200 1.200h7.600M1.200 7.200h9.600" stroke="#1c3ca0" stroke-width="1.400"/><path d="M3 1.500l2 2.700-3 3h8l-3-3 2-2.700z" fill="#b8c4ec" stroke="#1c3ca0" stroke-width="1.100" stroke-linejoin="round"/><path d="M6 7.500v5l-1 .3" stroke="#1c3ca0" stroke-width="1.500" fill="none"/></svg>
<div class="a " style="left:202px;top:250px;width:12px;height:12px;background:linear-gradient(135deg,#ec7050 0%,#e04820 55%,#cc3008 100%);border-radius:2px"></div>
<svg class="a" style="left:202px;top:250px" width="12" height="12" viewBox="0 0 12 12"><path d="M3 3l6 6M9 3l-6 6" stroke="#fff" stroke-width="2.200"/></svg>
<div class="a " style="left:4px;top:268px;width:215px;height:30px;background:linear-gradient(90deg,rgba(255,255,255,.35) 0%,rgba(255,255,255,0) 80%),linear-gradient(180deg,#f3f1e7 0%,#eeebdd 50%,#e6e3d0 100%)"></div>
<div class="a " style="left:8px;top:274px;width:2px;height:2px;background:#b8b4a0"></div>
<div class="a " style="left:9px;top:275px;width:1px;height:1px;background:#8c8874"></div>
<div class="a " style="left:8px;top:278px;width:2px;height:2px;background:#b8b4a0"></div>
<div class="a " style="left:9px;top:279px;width:1px;height:1px;background:#8c8874"></div>
<div class="a " style="left:8px;top:282px;width:2px;height:2px;background:#b8b4a0"></div>
<div class="a " style="left:9px;top:283px;width:1px;height:1px;background:#8c8874"></div>
<div class="a " style="left:8px;top:286px;width:2px;height:2px;background:#b8b4a0"></div>
<div class="a " style="left:9px;top:287px;width:1px;height:1px;background:#8c8874"></div>
<div class="a " style="left:8px;top:290px;width:2px;height:2px;background:#b8b4a0"></div>
<div class="a " style="left:9px;top:291px;width:1px;height:1px;background:#8c8874"></div>
<div class="a " style="left:15px;top:274px;width:80px;height:18px;background:#fff"></div>
<div class="t " style="left:17px;top:277px;">Current</div>
<div class="a " style="left:82px;top:275px;width:13px;height:16px;background:linear-gradient(180deg,#c9d7fb 0%,#bccdf8 60%,#aebff0 100%);border-radius:2px"></div>
<svg class="a" style="left:84px;top:280px" width="9" height="7" viewBox="0 0 9 7"><path d="M1 1.500l3.500 3.500 3.500-3.500" stroke="#4d6185" stroke-width="2" fill="none"/></svg>
<svg class="a" style="left:101px;top:275px" width="17" height="17" viewBox="0 0 17 17"><g transform="translate(0 0) scale(1)"><defs><linearGradient id="fg4" x1="0" x2="1"><stop offset="0" stop-color="#fff"/><stop offset=".45" stop-color="#ececf0"/><stop offset=".7" stop-color="#b8b8c2" stop-opacity=".55"/><stop offset="1" stop-color="#fff"/></linearGradient></defs><path d="M.6 2.600Q8 6 15.400 2.600L9.600 9.300v4.700L6.600 15.600V9.300z" fill="url(#fg4)" stroke="#b8b8c2" stroke-width=".9" stroke-linejoin="round"/><ellipse cx="8" cy="2.600" rx="7.400" ry="1.900" fill="#ececf0" stroke="#b8b8c2" stroke-width=".9"/><ellipse cx="8" cy="2.900" rx="5.400" ry="1" fill="#fff" opacity=".8"/></g><rect x="6.500" y="9.500" width="8" height="4.500" rx="1.800" transform="rotate(-38 10.500 11.700)" fill="#f6f6f8" stroke="#b4b4bc" stroke-width=".9"/></svg>
<svg class="a" style="left:125px;top:275px" width="17" height="17" viewBox="0 0 17 17"><g transform="translate(0 0) scale(1)"><defs><linearGradient id="fg5" x1="0" x2="1"><stop offset="0" stop-color="#fff"/><stop offset=".45" stop-color="#dfe3f0"/><stop offset=".7" stop-color="#8c98b8" stop-opacity=".55"/><stop offset="1" stop-color="#fff"/></linearGradient></defs><path d="M.6 2.600Q8 6 15.400 2.600L9.600 9.300v4.700L6.600 15.600V9.300z" fill="url(#fg5)" stroke="#8c98b8" stroke-width=".9" stroke-linejoin="round"/><ellipse cx="8" cy="2.600" rx="7.400" ry="1.900" fill="#dfe3f0" stroke="#8c98b8" stroke-width=".9"/><ellipse cx="8" cy="2.900" rx="5.400" ry="1" fill="#fff" opacity=".8"/></g><g transform="translate(4.5 5.5) scale(0.75)"><rect x="0" y="0" width="7.500" height="7.500" rx=".7" fill="#2c2c30"/><rect x="1.300" y=".4" width="5" height="2.600" fill="#f4f4f8"/><rect x="4.300" y=".7" width="1.100" height="1.800" fill="#445"/><rect x="1" y="3.700" width="5.500" height="1.800" fill="#e83030"/><rect x="1" y="5.500" width="5.500" height="2" fill="#fff"/></g><g transform="translate(7.5 8.5) scale(1)"><rect x="0" y="0" width="7.500" height="7.500" rx=".7" fill="#2c2c30"/><rect x="1.300" y=".4" width="5" height="2.600" fill="#f4f4f8"/><rect x="4.300" y=".7" width="1.100" height="1.800" fill="#445"/><rect x="1" y="3.700" width="5.500" height="1.800" fill="#e83030"/><rect x="1" y="5.500" width="5.500" height="2" fill="#fff"/></g></svg>
<svg class="a" style="left:144px;top:281px" width="5" height="3" viewBox="0 0 5 3"><path d="M0 0h5l-2.500 3z" fill="#000"/></svg>
<svg class="a" style="left:158px;top:275px" width="19" height="17" viewBox="0 0 19 17"><g transform="translate(0 0) scale(1)"><defs><linearGradient id="fg6" x1="0" x2="1"><stop offset="0" stop-color="#fff"/><stop offset=".45" stop-color="#ececf0"/><stop offset=".7" stop-color="#b8b8c2" stop-opacity=".55"/><stop offset="1" stop-color="#fff"/></linearGradient></defs><path d="M.6 2.600Q8 6 15.400 2.600L9.600 9.300v4.700L6.600 15.600V9.300z" fill="url(#fg6)" stroke="#b8b8c2" stroke-width=".9" stroke-linejoin="round"/><ellipse cx="8" cy="2.600" rx="7.400" ry="1.900" fill="#ececf0" stroke="#b8b8c2" stroke-width=".9"/><ellipse cx="8" cy="2.900" rx="5.400" ry="1" fill="#fff" opacity=".8"/></g><path d="M8.500 9l6.500 6.500M15 9l-6.500 6.500" stroke="#9a9aa2" stroke-width="2.600"/><path d="M9.600 10.100l4.300 4.300M13.900 10.100l-4.300 4.300" stroke="#c8c8cc" stroke-width=".8"/></svg>
<svg class="a" style="left:181px;top:287px" width="5" height="3" viewBox="0 0 5 3"><path d="M0 0h5l-2.500 3z" fill="#000"/></svg>
<div class="a " style="left:4px;top:297px;width:215px;height:438px;background:#ece9d8;border:1px solid #7f9db9"></div>
<div class="a " style="left:5px;top:298px;width:196px;height:436px;background:#ece9d8"></div>
<div class="a " style="left:200px;top:298px;width:1px;height:418px;background:#aca899"></div>
<div class="a " style="left:201px;top:298px;width:1px;height:436px;background:#fff"></div>
<div class="t" style="left:36px;top:302px;width:51px;overflow:hidden">Status</div>
<div class="a " style="left:89px;top:299px;width:1px;height:18px;background:#aca899"></div>
<div class="a " style="left:183px;top:301px;width:15px;height:14px;background:linear-gradient(180deg,#c9d7fb 0%,#bccdf8 60%,#aebff0 100%);border-radius:2px"></div>
<svg class="a" style="left:186px;top:305px" width="9" height="7" viewBox="0 0 9 7"><path d="M1 1.500l3.500 3.500 3.500-3.500" stroke="#4d6185" stroke-width="2" fill="none"/></svg>
<div class="a " style="left:5px;top:317px;width:196px;height:1px;border-top:1px dotted #aca899"></div>
<div class="t" style="left:36px;top:321px;width:51px;overflow:hidden">Priority</div>
<div class="a " style="left:89px;top:318px;width:1px;height:18px;background:#aca899"></div>
<div class="a " style="left:183px;top:320px;width:15px;height:14px;background:linear-gradient(180deg,#c9d7fb 0%,#bccdf8 60%,#aebff0 100%);border-radius:2px"></div>
<svg class="a" style="left:186px;top:324px" width="9" height="7" viewBox="0 0 9 7"><path d="M1 1.500l3.500 3.500 3.500-3.500" stroke="#4d6185" stroke-width="2" fill="none"/></svg>
<div class="a " style="left:5px;top:336px;width:196px;height:1px;border-top:1px dotted #aca899"></div>
<div class="t" style="left:36px;top:340px;width:51px;overflow:hidden">Actual Tim</div>
<div class="a " style="left:89px;top:337px;width:1px;height:18px;background:#aca899"></div>
<div class="a " style="left:183px;top:339px;width:15px;height:14px;background:linear-gradient(180deg,#c9d7fb 0%,#bccdf8 60%,#aebff0 100%);border-radius:2px"></div>
<svg class="a" style="left:186px;top:343px" width="9" height="7" viewBox="0 0 9 7"><path d="M1 1.500l3.500 3.500 3.500-3.500" stroke="#4d6185" stroke-width="2" fill="none"/></svg>
<div class="a " style="left:5px;top:355px;width:196px;height:1px;border-top:1px dotted #aca899"></div>
<div class="t" style="left:36px;top:359px;width:51px;overflow:hidden">Estimated</div>
<div class="a " style="left:89px;top:356px;width:1px;height:18px;background:#aca899"></div>
<div class="a " style="left:183px;top:358px;width:15px;height:14px;background:linear-gradient(180deg,#c9d7fb 0%,#bccdf8 60%,#aebff0 100%);border-radius:2px"></div>
<svg class="a" style="left:186px;top:362px" width="9" height="7" viewBox="0 0 9 7"><path d="M1 1.500l3.500 3.500 3.500-3.500" stroke="#4d6185" stroke-width="2" fill="none"/></svg>
<div class="a " style="left:5px;top:374px;width:196px;height:1px;border-top:1px dotted #aca899"></div>
<div class="a " style="left:9px;top:379px;width:9px;height:9px;background:linear-gradient(135deg,#fff 30%,#d4d0c0);border:1px solid #7c96b4;border-radius:1px"></div>
<div class="a " style="left:11px;top:383px;width:5px;height:1px;background:#000"></div>
<div class="t b" style="left:23px;top:378px;font-size:11px">By Date</div>
<div class="a " style="left:5px;top:393px;width:196px;height:1px;border-top:1px dotted #aca899"></div>
<div class="t" style="left:36px;top:397px;width:51px;overflow:hidden">Date Rang</div>
<div class="a " style="left:89px;top:394px;width:1px;height:18px;background:#aca899"></div>
<div class="a " style="left:183px;top:396px;width:15px;height:14px;background:linear-gradient(180deg,#c9d7fb 0%,#bccdf8 60%,#aebff0 100%);border-radius:2px"></div>
<svg class="a" style="left:186px;top:400px" width="9" height="7" viewBox="0 0 9 7"><path d="M1 1.500l3.500 3.500 3.500-3.500" stroke="#4d6185" stroke-width="2" fill="none"/></svg>
<div class="a " style="left:5px;top:412px;width:196px;height:1px;border-top:1px dotted #aca899"></div>
<div class="t" style="left:36px;top:416px;width:51px;overflow:hidden">Date Creal</div>
<div class="a " style="left:89px;top:413px;width:1px;height:18px;background:#aca899"></div>
<div class="a " style="left:183px;top:415px;width:15px;height:14px;background:linear-gradient(180deg,#c9d7fb 0%,#bccdf8 60%,#aebff0 100%);border-radius:2px"></div>
<svg class="a" style="left:186px;top:419px" width="9" height="7" viewBox="0 0 9 7"><path d="M1 1.500l3.500 3.500 3.500-3.500" stroke="#4d6185" stroke-width="2" fill="none"/></svg>
<div class="a " style="left:5px;top:431px;width:196px;height:1px;border-top:1px dotted #aca899"></div>
<div class="t" style="left:36px;top:435px;width:51px;overflow:hidden">Date Last</div>
<div class="a " style="left:89px;top:432px;width:1px;height:18px;background:#aca899"></div>
<div class="a " style="left:183px;top:434px;width:15px;height:14px;background:linear-gradient(180deg,#c9d7fb 0%,#bccdf8 60%,#aebff0 100%);border-radius:2px"></div>
<svg class="a" style="left:186px;top:438px" width="9" height="7" viewBox="0 0 9 7"><path d="M1 1.500l3.500 3.500 3.500-3.500" stroke="#4d6185" stroke-width="2" fill="none"/></svg>
<div class="a " style="left:5px;top:450px;width:196px;height:1px;border-top:1px dotted #aca899"></div>
<div class="t" style="left:36px;top:454px;width:51px;overflow:hidden">Date Start</div>
<div class="a " style="left:89px;top:451px;width:1px;height:18px;background:#aca899"></div>
<div class="a " style="left:183px;top:453px;width:15px;height:14px;background:linear-gradient(180deg,#c9d7fb 0%,#bccdf8 60%,#aebff0 100%);border-radius:2px"></div>
<svg class="a" style="left:186px;top:457px" width="9" height="7" viewBox="0 0 9 7"><path d="M1 1.500l3.500 3.500 3.500-3.500" stroke="#4d6185" stroke-width="2" fill="none"/></svg>
<div class="a " style="left:5px;top:469px;width:196px;height:1px;border-top:1px dotted #aca899"></div>
<div class="t" style="left:36px;top:473px;width:51px;overflow:hidden">Date Comp</div>
<div class="a " style="left:89px;top:470px;width:1px;height:18px;background:#aca899"></div>
<div class="a " style="left:183px;top:472px;width:15px;height:14px;background:linear-gradient(180deg,#c9d7fb 0%,#bccdf8 60%,#aebff0 100%);border-radius:2px"></div>
<svg class="a" style="left:186px;top:476px" width="9" height="7" viewBox="0 0 9 7"><path d="M1 1.500l3.500 3.500 3.500-3.500" stroke="#4d6185" stroke-width="2" fill="none"/></svg>
<div class="a " style="left:5px;top:488px;width:196px;height:1px;border-top:1px dotted #aca899"></div>
<div class="a " style="left:9px;top:493px;width:9px;height:9px;background:linear-gradient(135deg,#fff 30%,#d4d0c0);border:1px solid #7c96b4;border-radius:1px"></div>
<div class="a " style="left:11px;top:497px;width:5px;height:1px;background:#000"></div>
<div class="t b" style="left:23px;top:492px;font-size:11px">By Resource</div>
<div class="a " style="left:5px;top:488px;width:196px;height:19px;border:1px solid #716f64;border-right-color:#fff;border-bottom-color:#fff;border-width:2px 0 1px 2px"></div>
<div class="a " style="left:5px;top:507px;width:196px;height:1px;border-top:1px dotted #aca899"></div>
<div class="t" style="left:36px;top:511px;width:51px;overflow:hidden">Owner</div>
<div class="a " style="left:89px;top:508px;width:1px;height:18px;background:#aca899"></div>
<div class="a " style="left:183px;top:510px;width:15px;height:14px;background:linear-gradient(180deg,#c9d7fb 0%,#bccdf8 60%,#aebff0 100%);border-radius:2px"></div>
<svg class="a" style="left:186px;top:514px" width="9" height="7" viewBox="0 0 9 7"><path d="M1 1.500l3.500 3.500 3.500-3.500" stroke="#4d6185" stroke-width="2" fill="none"/></svg>
<div class="a " style="left:5px;top:526px;width:196px;height:1px;border-top:1px dotted #aca899"></div>
<div class="t" style="left:36px;top:530px;width:51px;overflow:hidden">Assignmer</div>
<div class="a " style="left:89px;top:527px;width:1px;height:18px;background:#aca899"></div>
<div class="a " style="left:183px;top:529px;width:15px;height:14px;background:linear-gradient(180deg,#c9d7fb 0%,#bccdf8 60%,#aebff0 100%);border-radius:2px"></div>
<svg class="a" style="left:186px;top:533px" width="9" height="7" viewBox="0 0 9 7"><path d="M1 1.500l3.500 3.500 3.500-3.500" stroke="#4d6185" stroke-width="2" fill="none"/></svg>
<div class="a " style="left:5px;top:545px;width:196px;height:1px;border-top:1px dotted #aca899"></div>
<div class="t" style="left:36px;top:549px;width:51px;overflow:hidden">Departmer</div>
<div class="a " style="left:89px;top:546px;width:1px;height:18px;background:#aca899"></div>
<div class="a " style="left:183px;top:548px;width:15px;height:14px;background:linear-gradient(180deg,#c9d7fb 0%,#bccdf8 60%,#aebff0 100%);border-radius:2px"></div>
<svg class="a" style="left:186px;top:552px" width="9" height="7" viewBox="0 0 9 7"><path d="M1 1.500l3.500 3.500 3.500-3.500" stroke="#4d6185" stroke-width="2" fill="none"/></svg>
<div class="a " style="left:5px;top:564px;width:196px;height:1px;border-top:1px dotted #aca899"></div>
<div class="a " style="left:9px;top:569px;width:9px;height:9px;background:linear-gradient(135deg,#fff 30%,#d4d0c0);border:1px solid #7c96b4;border-radius:1px"></div>
<div class="a " style="left:11px;top:573px;width:5px;height:1px;background:#000"></div>
<div class="t b" style="left:23px;top:568px;font-size:11px">Custom Fields</div>
<div class="a " style="left:5px;top:583px;width:196px;height:1px;border-top:1px dotted #aca899"></div>
<div class="t" style="left:36px;top:587px;width:51px;overflow:hidden">Actual Wo</div>
<div class="a " style="left:89px;top:584px;width:1px;height:18px;background:#aca899"></div>
<div class="a " style="left:183px;top:586px;width:15px;height:14px;background:linear-gradient(180deg,#c9d7fb 0%,#bccdf8 60%,#aebff0 100%);border-radius:2px"></div>
<svg class="a" style="left:186px;top:590px" width="9" height="7" viewBox="0 0 9 7"><path d="M1 1.500l3.500 3.500 3.500-3.500" stroke="#4d6185" stroke-width="2" fill="none"/></svg>
<div class="a " style="left:5px;top:602px;width:196px;height:1px;border-top:1px dotted #aca899"></div>
<div class="t" style="left:36px;top:606px;width:51px;overflow:hidden">Standard F</div>
<div class="a " style="left:89px;top:603px;width:1px;height:18px;background:#aca899"></div>
<div class="a " style="left:183px;top:605px;width:15px;height:14px;background:linear-gradient(180deg,#c9d7fb 0%,#bccdf8 60%,#aebff0 100%);border-radius:2px"></div>
<svg class="a" style="left:186px;top:609px" width="9" height="7" viewBox="0 0 9 7"><path d="M1 1.500l3.500 3.500 3.500-3.500" stroke="#4d6185" stroke-width="2" fill="none"/></svg>
<div class="a " style="left:5px;top:621px;width:196px;height:1px;border-top:1px dotted #aca899"></div>
<div class="t" style="left:36px;top:625px;width:51px;overflow:hidden">Actual Ove</div>
<div class="a " style="left:89px;top:622px;width:1px;height:18px;background:#aca899"></div>
<div class="a " style="left:183px;top:624px;width:15px;height:14px;background:linear-gradient(180deg,#c9d7fb 0%,#bccdf8 60%,#aebff0 100%);border-radius:2px"></div>
<svg class="a" style="left:186px;top:628px" width="9" height="7" viewBox="0 0 9 7"><path d="M1 1.500l3.500 3.500 3.500-3.500" stroke="#4d6185" stroke-width="2" fill="none"/></svg>
<div class="a " style="left:5px;top:640px;width:196px;height:1px;border-top:1px dotted #aca899"></div>
<div class="t" style="left:36px;top:644px;width:51px;overflow:hidden">Overtime F</div>
<div class="a " style="left:89px;top:641px;width:1px;height:18px;background:#aca899"></div>
<div class="a " style="left:183px;top:643px;width:15px;height:14px;background:linear-gradient(180deg,#c9d7fb 0%,#bccdf8 60%,#aebff0 100%);border-radius:2px"></div>
<svg class="a" style="left:186px;top:647px" width="9" height="7" viewBox="0 0 9 7"><path d="M1 1.500l3.500 3.500 3.500-3.500" stroke="#4d6185" stroke-width="2" fill="none"/></svg>
<div class="a " style="left:5px;top:659px;width:196px;height:1px;border-top:1px dotted #aca899"></div>
<div class="t" style="left:36px;top:663px;width:51px;overflow:hidden">Resource</div>
<div class="a " style="left:89px;top:660px;width:1px;height:18px;background:#aca899"></div>
<div class="a " style="left:183px;top:662px;width:15px;height:14px;background:linear-gradient(180deg,#c9d7fb 0%,#bccdf8 60%,#aebff0 100%);border-radius:2px"></div>
<svg class="a" style="left:186px;top:666px" width="9" height="7" viewBox="0 0 9 7"><path d="M1 1.500l3.500 3.500 3.500-3.500" stroke="#4d6185" stroke-width="2" fill="none"/></svg>
<div class="a " style="left:5px;top:678px;width:196px;height:1px;border-top:1px dotted #aca899"></div>
<div class="t" style="left:36px;top:682px;width:51px;overflow:hidden">Task Fixec</div>
<div class="a " style="left:89px;top:679px;width:1px;height:18px;background:#aca899"></div>
<div class="a " style="left:183px;top:681px;width:15px;height:14px;background:linear-gradient(180deg,#c9d7fb 0%,#bccdf8 60%,#aebff0 100%);border-radius:2px"></div>
<svg class="a" style="left:186px;top:685px" width="9" height="7" viewBox="0 0 9 7"><path d="M1 1.500l3.500 3.500 3.500-3.500" stroke="#4d6185" stroke-width="2" fill="none"/></svg>
<div class="a " style="left:5px;top:697px;width:196px;height:1px;border-top:1px dotted #aca899"></div>
<div class="t" style="left:36px;top:701px;width:51px;overflow:hidden">Actual Cos</div>
<div class="a " style="left:89px;top:698px;width:1px;height:18px;background:#aca899"></div>
<div class="a " style="left:183px;top:700px;width:15px;height:14px;background:linear-gradient(180deg,#c9d7fb 0%,#bccdf8 60%,#aebff0 100%);border-radius:2px"></div>
<svg class="a" style="left:186px;top:704px" width="9" height="7" viewBox="0 0 9 7"><path d="M1 1.500l3.500 3.500 3.500-3.500" stroke="#4d6185" stroke-width="2" fill="none"/></svg>
<div class="a " style="left:5px;top:716px;width:196px;height:1px;border-top:1px dotted #aca899"></div>
<div class="a " style="left:5px;top:716px;width:196px;height:1px;background:#aca899"></div>
<div class="a " style="left:202px;top:298px;width:16px;height:435px;background:linear-gradient(90deg,#eeede5 0%,#f8f8f4 30%,#fefefc 70%,#fff 100%)"></div>
<div class="a " style="left:202px;top:298px;width:15px;height:17px;background:#fff;border-radius:3px"></div>
<div class="a " style="left:203px;top:299px;width:13px;height:14px;background:linear-gradient(135deg,#d2defc 0%,#c0d0fa 45%,#aec2f6 100%);border-radius:2px"></div>
<div class="a " style="left:203px;top:314px;width:13px;height:1px;background:#b4c8f6;border-radius:0 0 2px 2px"></div>
<svg class="a" style="left:205px;top:302px" width="9" height="7" viewBox="0 0 9 7"><path d="M1 5.500l3.500-3.500 3.500 3.500" stroke="#4d6185" stroke-width="2" fill="none"/></svg>
<div class="a " style="left:202px;top:363px;width:15px;height:354px;background:#fff;border-radius:3px"></div>
<div class="a " style="left:203px;top:364px;width:13px;height:351px;background:linear-gradient(90deg,#cbd9fc 0%,#c2d2fb 40%,#b3c5f5 100%);border-radius:2px"></div>
<div class="a " style="left:203px;top:716px;width:13px;height:1px;background:#b4c8f6;border-radius:0 0 2px 2px"></div>
<div class="a " style="left:207px;top:536px;width:5px;height:1px;background:#eef3fe"></div>
<div class="a " style="left:208px;top:537px;width:5px;height:1px;background:#8cb0f8"></div>
<div class="a " style="left:207px;top:538px;width:5px;height:1px;background:#eef3fe"></div>
<div class="a " style="left:208px;top:539px;width:5px;height:1px;background:#8cb0f8"></div>
<div class="a " style="left:207px;top:540px;width:5px;height:1px;background:#eef3fe"></div>
<div class="a " style="left:208px;top:541px;width:5px;height:1px;background:#8cb0f8"></div>
<div class="a " style="left:207px;top:542px;width:5px;height:1px;background:#eef3fe"></div>
<div class="a " style="left:208px;top:543px;width:5px;height:1px;background:#8cb0f8"></div>
<div class="a " style="left:202px;top:717px;width:15px;height:17px;background:#fff;border-radius:3px"></div>
<div class="a " style="left:203px;top:718px;width:13px;height:14px;background:linear-gradient(135deg,#d2defc 0%,#c0d0fa 45%,#aec2f6 100%);border-radius:2px"></div>
<div class="a " style="left:203px;top:733px;width:13px;height:1px;background:#b4c8f6;border-radius:0 0 2px 2px"></div>
<svg class="a" style="left:205px;top:721px" width="9" height="7" viewBox="0 0 9 7"><path d="M1 1.500l3.500 3.500 3.500-3.500" stroke="#4d6185" stroke-width="2" fill="none"/></svg>
<div class="a " style="left:219px;top:101px;width:3px;height:640px;background:#ece9d8"></div>
<div class="a " style="left:221px;top:102px;width:1055px;height:40px;background:#aca899;border:1px solid #aca899;border-right-color:#f8f7f0;border-bottom-color:#f8f7f0"></div>
<div class="a " style="left:222px;top:103px;width:1053px;height:38px;background:#aca899;border:1px solid #f1efe2"></div>
<div class="a " style="left:229px;top:109px;width:13px;height:13px;background:#fff;border:1px solid #1c5180"></div>
<svg class="a" style="left:230px;top:110px" width="11" height="11" viewBox="0 0 11 11"><path d="M2 5.500l2.500 2.600 4.500-5.600" stroke="#21a121" stroke-width="2" fill="none"/></svg>
<div class="t " style="left:244px;top:109px;letter-spacing:0.15px;color:#fff">Current filter:</div>
<div class="t " style="left:368px;top:109px;letter-spacing:-0.06px;color:#fff">(Task Group  (Marketing Department,Promotion))</div>
<div class="a " style="left:221px;top:144px;width:1055px;height:593px;background:#fff;border:1px solid #7f9db9"></div>
<div class="a " style="left:222px;top:145px;width:1053px;height:35px;background:#aca899"></div>
<div class="t " style="left:229px;top:157px;letter-spacing:-0.08px;color:#e2dfd2">Drag a column header here to group by that column</div>
<div class="a " style="left:222px;top:180px;width:1053px;height:19px;background:linear-gradient(180deg,#efecdd 0%,#ece9d8 70%,#e2dfcc 100%)"></div>
<div class="a " style="left:222px;top:198px;width:1053px;height:1px;background:#d6d2c2"></div>
<div class="t" style="left:223px;width:75px;text-align:center;top:184px;">ID</div>
<div class="a " style="left:297px;top:183px;width:1px;height:12px;background:#fff"></div>
<div class="a " style="left:298px;top:183px;width:1px;height:12px;background:#c5c2b0"></div>
<div class="t" style="left:298px;width:87px;text-align:center;top:184px;">Name</div>
<div class="a " style="left:384px;top:183px;width:1px;height:12px;background:#fff"></div>
<div class="a " style="left:385px;top:183px;width:1px;height:12px;background:#c5c2b0"></div>
<div class="t" style="left:385px;width:148px;text-align:center;top:184px;">Status</div>
<div class="a " style="left:566px;top:183px;width:1px;height:12px;background:#fff"></div>
<div class="a " style="left:567px;top:183px;width:1px;height:12px;background:#c5c2b0"></div>
<div class="a " style="left:548px;top:184px;width:14px;height:12px;background:linear-gradient(180deg,#c8d6fa,#b6c8f4);border:1px solid #e6edfc"></div>
<svg class="a" style="left:550px;top:187px" width="9" height="7" viewBox="0 0 9 7"><path d="M1.200 1.500l3.300 3.300 3.300-3.300" stroke="#3a5088" stroke-width="1.800" fill="none"/></svg>
<div class="t" style="left:567px;width:87px;text-align:center;top:184px;">Priority</div>
<div class="a " style="left:671px;top:183px;width:1px;height:12px;background:#fff"></div>
<div class="a " style="left:672px;top:183px;width:1px;height:12px;background:#c5c2b0"></div>
<div class="a " style="left:656px;top:184px;width:14px;height:12px;background:linear-gradient(180deg,#c8d6fa,#b6c8f4);border:1px solid #e6edfc"></div>
<svg class="a" style="left:658px;top:187px" width="9" height="7" viewBox="0 0 9 7"><path d="M1.200 1.500l3.300 3.300 3.300-3.300" stroke="#3a5088" stroke-width="1.800" fill="none"/></svg>
<div class="t" style="left:672px;width:128px;text-align:center;top:184px;">Start Date</div>
<div class="a " style="left:817px;top:183px;width:1px;height:12px;background:#fff"></div>
<div class="a " style="left:818px;top:183px;width:1px;height:12px;background:#c5c2b0"></div>
<div class="a " style="left:802px;top:184px;width:14px;height:12px;background:linear-gradient(180deg,#c8d6fa,#b6c8f4);border:1px solid #e6edfc"></div>
<svg class="a" style="left:804px;top:187px" width="9" height="7" viewBox="0 0 9 7"><path d="M1.200 1.500l3.300 3.300 3.300-3.300" stroke="#3a5088" stroke-width="1.800" fill="none"/></svg>
<div class="t" style="left:818px;width:113px;text-align:center;top:184px;">Finish Date</div>
<div class="a " style="left:948px;top:183px;width:1px;height:12px;background:#fff"></div>
<div class="a " style="left:949px;top:183px;width:1px;height:12px;background:#c5c2b0"></div>
<div class="a " style="left:933px;top:184px;width:14px;height:12px;background:linear-gradient(180deg,#c8d6fa,#b6c8f4);border:1px solid #e6edfc"></div>
<svg class="a" style="left:935px;top:187px" width="9" height="7" viewBox="0 0 9 7"><path d="M1.200 1.500l3.300 3.300 3.300-3.300" stroke="#3a5088" stroke-width="1.800" fill="none"/></svg>
<div class="t" style="left:949px;width:141px;text-align:center;top:184px;">Assigned</div>
<div class="a " style="left:1107px;top:183px;width:1px;height:12px;background:#fff"></div>
<div class="a " style="left:1108px;top:183px;width:1px;height:12px;background:#c5c2b0"></div>
<div class="a " style="left:1092px;top:184px;width:14px;height:12px;background:linear-gradient(180deg,#c8d6fa,#b6c8f4);border:1px solid #e6edfc"></div>
<svg class="a" style="left:1094px;top:187px" width="9" height="7" viewBox="0 0 9 7"><path d="M1.200 1.500l3.300 3.300 3.300-3.300" stroke="#3a5088" stroke-width="1.800" fill="none"/></svg>
<div class="t" style="left:1108px;width:149px;text-align:center;top:184px;">Due Date</div>
<div class="a " style="left:1258px;top:184px;width:14px;height:12px;background:linear-gradient(180deg,#c8d6fa,#b6c8f4);border:1px solid #e6edfc"></div>
<svg class="a" style="left:1260px;top:187px" width="9" height="7" viewBox="0 0 9 7"><path d="M1.200 1.500l3.300 3.300 3.300-3.300" stroke="#3a5088" stroke-width="1.800" fill="none"/></svg>
<svg class="a" style="left:536px;top:185px" width="8" height="8" viewBox="0 0 8 8"><path d="M.800 1h6.400l-3.200 6z" fill="#f4f2e8" stroke="#a8a593" stroke-width="1"/></svg>
<div class="a " style="left:222px;top:220px;width:1053px;height:1px;background:#c0bcac"></div>
<div class="t" style="right:984px;top:204px;">15</div>
<div class="t " style="left:300px;top:204px;">Task 1</div>
<div class="t " style="left:411px;top:204px;letter-spacing:-0.4px;">Closed</div>
<div class="t " style="left:587px;top:204px;letter-spacing:-0.3px;">Normal</div>
<svg class="a" style="left:568px;top:201px" width="16" height="17" viewBox="0 0 16 17"><circle cx="8" cy="8.200" r="7.500" fill="url(#gb)" stroke="#0c6c0c" stroke-width=".9"/><ellipse cx="8" cy="4.600" rx="4.800" ry="2.900" fill="url(#gh)"/></svg>
<div class="t" style="left:672px;width:146px;text-align:center;top:204px;letter-spacing:.15px">11/11/2010</div>
<div class="t" style="left:818px;width:131px;text-align:center;top:204px;letter-spacing:.15px">11/12/2010</div>
<div class="t " style="left:951px;top:204px;letter-spacing:-0.24px;">Joseph Lewis</div>
<div class="t" style="left:1108px;width:166px;text-align:center;top:204px;letter-spacing:.15px">11/30/2010</div>
<div class="a " style="left:222px;top:242px;width:1053px;height:1px;background:#c0bcac"></div>
<div class="t" style="right:984px;top:226px;">16</div>
<div class="t " style="left:300px;top:226px;">Task 3</div>
<div class="t " style="left:411px;top:226px;letter-spacing:-0.4px;">Closed</div>
<div class="t " style="left:587px;top:226px;letter-spacing:-0.3px;">Normal</div>
<svg class="a" style="left:568px;top:223px" width="16" height="17" viewBox="0 0 16 17"><circle cx="8" cy="8.200" r="7.500" fill="url(#gb)" stroke="#0c6c0c" stroke-width=".9"/><ellipse cx="8" cy="4.600" rx="4.800" ry="2.900" fill="url(#gh)"/></svg>
<div class="t" style="left:672px;width:146px;text-align:center;top:226px;letter-spacing:.15px">11/2/2010</div>
<div class="t" style="left:818px;width:131px;text-align:center;top:226px;letter-spacing:.15px">11/10/2010</div>
<div class="t " style="left:951px;top:226px;letter-spacing:-0.22px;">David Elliot</div>
<div class="t" style="left:1108px;width:166px;text-align:center;top:226px;letter-spacing:.15px">11/10/2010</div>
<div class="a " style="left:222px;top:264px;width:1053px;height:1px;background:#c0bcac"></div>
<div class="t" style="right:984px;top:248px;">19</div>
<div class="t " style="left:300px;top:248px;">Task 10</div>
<div class="t " style="left:411px;top:248px;letter-spacing:-0.4px;">Closed</div>
<div class="t " style="left:587px;top:248px;letter-spacing:-0.3px;">Normal</div>
<svg class="a" style="left:568px;top:245px" width="16" height="17" viewBox="0 0 16 17"><circle cx="8" cy="8.200" r="7.500" fill="url(#gb)" stroke="#0c6c0c" stroke-width=".9"/><ellipse cx="8" cy="4.600" rx="4.800" ry="2.900" fill="url(#gh)"/></svg>
<div class="t" style="left:672px;width:146px;text-align:center;top:248px;letter-spacing:.15px">10/25/2010</div>
<div class="t" style="left:818px;width:131px;text-align:center;top:248px;letter-spacing:.15px">10/30/2010</div>
<div class="t " style="left:951px;top:248px;letter-spacing:-0.22px;">Brian Moran</div>
<div class="t" style="left:1108px;width:166px;text-align:center;top:248px;letter-spacing:.15px">10/25/2010</div>
<div class="a " style="left:222px;top:286px;width:1053px;height:1px;background:#c0bcac"></div>
<div class="t" style="right:984px;top:270px;">20</div>
<div class="t " style="left:300px;top:270px;">Task 7</div>
<div class="t " style="left:411px;top:270px;letter-spacing:-0.28px;">Canceled</div>
<div class="t " style="left:587px;top:270px;letter-spacing:-0.3px;">Normal</div>
<svg class="a" style="left:568px;top:267px" width="16" height="17" viewBox="0 0 16 17"><circle cx="8" cy="8.200" r="7.500" fill="url(#gb)" stroke="#0c6c0c" stroke-width=".9"/><ellipse cx="8" cy="4.600" rx="4.800" ry="2.900" fill="url(#gh)"/></svg>
<div class="t" style="left:672px;width:146px;text-align:center;top:270px;letter-spacing:.15px">12/1/2010</div>
<div class="t" style="left:818px;width:131px;text-align:center;top:270px;letter-spacing:.15px">12/9/2010</div>
<div class="t " style="left:951px;top:270px;"></div>
<div class="t" style="left:1108px;width:166px;text-align:center;top:270px;letter-spacing:.15px">12/9/2010</div>
<div class="a " style="left:222px;top:308px;width:1053px;height:1px;background:#c0bcac"></div>
<div class="t" style="right:984px;top:292px;">17</div>
<div class="t " style="left:300px;top:292px;">Task 2</div>
<div class="t " style="left:411px;top:292px;letter-spacing:-0.32px;">Assigned</div>
<div class="t " style="left:587px;top:292px;letter-spacing:-0.3px;">Normal</div>
<svg class="a" style="left:568px;top:289px" width="16" height="17" viewBox="0 0 16 17"><circle cx="8" cy="8.200" r="7.500" fill="url(#gb)" stroke="#0c6c0c" stroke-width=".9"/><ellipse cx="8" cy="4.600" rx="4.800" ry="2.900" fill="url(#gh)"/></svg>
<div class="t" style="left:672px;width:146px;text-align:center;top:292px;letter-spacing:.15px">1/12/2010</div>
<div class="t" style="left:818px;width:131px;text-align:center;top:292px;letter-spacing:.15px">1/20/2010</div>
<div class="t " style="left:951px;top:292px;letter-spacing:-0.22px;">Brian Moran</div>
<div class="t" style="left:1108px;width:166px;text-align:center;top:292px;letter-spacing:.15px">12/20/2010</div>
<div class="a " style="left:222px;top:309px;width:1053px;height:21px;background:#ece9d8"></div>
<div class="a " style="left:222px;top:330px;width:1053px;height:1px;background:#c0bcac"></div>
<div class="t" style="right:984px;top:314px;">18</div>
<div class="t " style="left:300px;top:314px;">Task 9</div>
<div class="t " style="left:411px;top:314px;letter-spacing:-0.32px;">Assigned</div>
<div class="t " style="left:587px;top:314px;letter-spacing:-0.3px;">Normal</div>
<svg class="a" style="left:568px;top:311px" width="16" height="17" viewBox="0 0 16 17"><circle cx="8" cy="8.200" r="7.500" fill="url(#gb)" stroke="#0c6c0c" stroke-width=".9"/><ellipse cx="8" cy="4.600" rx="4.800" ry="2.900" fill="url(#gh)"/></svg>
<div class="t" style="left:672px;width:146px;text-align:center;top:314px;letter-spacing:.15px">12/14/2010</div>
<div class="t" style="left:818px;width:131px;text-align:center;top:314px;letter-spacing:.15px">12/21/2010</div>
<div class="t " style="left:951px;top:314px;">Kevin Turner</div>
<div class="t" style="left:1108px;width:166px;text-align:center;top:314px;letter-spacing:.15px">12/28/2010</div>
<div class="a " style="left:222px;top:352px;width:1053px;height:1px;background:#c0bcac"></div>
<div class="t" style="right:984px;top:336px;">31</div>
<div class="t " style="left:300px;top:336px;">Task 11</div>
<div class="t " style="left:411px;top:336px;">New</div>
<div class="t " style="left:587px;top:336px;letter-spacing:-0.3px;">Normal</div>
<svg class="a" style="left:568px;top:333px" width="16" height="17" viewBox="0 0 16 17"><circle cx="8" cy="8.200" r="7.500" fill="url(#gb)" stroke="#0c6c0c" stroke-width=".9"/><ellipse cx="8" cy="4.600" rx="4.800" ry="2.900" fill="url(#gh)"/></svg>
<div class="t" style="left:672px;width:146px;text-align:center;top:336px;letter-spacing:.15px">12/6/2010</div>
<div class="t" style="left:818px;width:131px;text-align:center;top:336px;letter-spacing:.15px">12/14/2010</div>
<div class="t " style="left:951px;top:336px;"></div>
<div class="t" style="left:1108px;width:166px;text-align:center;top:336px;letter-spacing:.15px"></div>
<div class="a " style="left:298px;top:199px;width:1px;height:154px;background:#c0bcac"></div>
<div class="a " style="left:385px;top:199px;width:1px;height:154px;background:#c0bcac"></div>
<div class="a " style="left:567px;top:199px;width:1px;height:154px;background:#c0bcac"></div>
<div class="a " style="left:672px;top:199px;width:1px;height:154px;background:#c0bcac"></div>
<div class="a " style="left:818px;top:199px;width:1px;height:154px;background:#c0bcac"></div>
<div class="a " style="left:949px;top:199px;width:1px;height:154px;background:#c0bcac"></div>
<div class="a " style="left:1108px;top:199px;width:1px;height:154px;background:#c0bcac"></div>
<div class="a " style="left:1273px;top:199px;width:1px;height:154px;background:#c0bcac"></div>
<div class="a " style="left:1274px;top:199px;width:1px;height:154px;background:#fff"></div>
<svg width="0" height="0" style="position:absolute"><defs><radialGradient id="gb" cx=".5" cy=".68" r=".62"><stop offset="0" stop-color="#0cf80c"/><stop offset=".5" stop-color="#0cc40c"/><stop offset="1" stop-color="#0a7c0a"/></radialGradient><linearGradient id="gh" x1="0" y1="0" x2="0" y2="1"><stop offset="0" stop-color="#fff" stop-opacity=".95"/><stop offset="1" stop-color="#fff" stop-opacity=".15"/></linearGradient></defs></svg>
<div class="a " style="left:385px;top:181px;width:182px;height:172px;border:2px solid #ff0000;box-shadow:inset 1px 1px 0 0 rgba(255,255,255,.85),inset 4px 4px 5px rgba(0,0,0,.32),4px 4px 5px rgba(0,0,0,.22)"></div>
<div class="a " style="left:222px;top:710px;width:1053px;height:26px;background:#ece9d8;border:1px solid #b8b4a0;border-left:none"></div>
<div class="a " style="left:224px;top:713px;width:74px;height:21px;background:#f1f0e8;border:1px solid #8c8a7c;border-right-color:#fff;border-bottom-color:#fff;border-radius:3px"></div>
<div class="t" style="right:987px;top:718px;">7</div>
<div class="a " style="left:1277px;top:98px;width:1px;height:641px;background:#a8b9ca"></div>
<div class="a " style="left:1278px;top:77px;width:2px;height:664px;background:#ece9d8"></div>
<div class="a " style="left:0px;top:738px;width:1280px;height:6px;background:#ece9d8"></div>
<div class="a " style="left:0px;top:738px;width:1278px;height:1px;background:#9db0c0"></div>
<div class="a " style="left:0px;top:741px;width:1280px;height:1px;background:#dcd9c8"></div>
<div class="a " style="left:1px;top:743px;width:1277px;height:23px;background:#fbfbf8;border-radius:4px"></div>
<div class="a " style="left:2px;top:744px;width:1275px;height:21px;background:#d6dff7;border-radius:3px"></div>
<div class="t " style="left:6px;top:748px;">Task history</div>
<svg class="a" style="left:1245px;top:748px" width="12" height="13" viewBox="0 0 12 13"><path d="M2.200 1.200h7.600M1.200 7.200h9.600" stroke="#1c3ca0" stroke-width="1.400"/><path d="M3 1.500l2 2.700-3 3h8l-3-3 2-2.700z" fill="#b8c4ec" stroke="#1c3ca0" stroke-width="1.100" stroke-linejoin="round"/><path d="M6 7.500v5l-1 .3" stroke="#1c3ca0" stroke-width="1.500" fill="none"/></svg>
<div class="a " style="left:1261px;top:748px;width:12px;height:12px;background:linear-gradient(135deg,#ec7050 0%,#e04820 55%,#cc3008 100%);border-radius:2px"></div>
<svg class="a" style="left:1261px;top:748px" width="12" height="12" viewBox="0 0 12 12"><path d="M3 3l6 6M9 3l-6 6" stroke="#fff" stroke-width="2.200"/></svg>
<div class="a " style="left:2px;top:766px;width:1275px;height:29px;background:linear-gradient(180deg,rgba(255,255,255,.12) 0%,rgba(255,255,255,0) 45%,rgba(160,155,130,.14) 92%,rgba(160,155,130,.3) 100%),linear-gradient(90deg,#f6f5f0 0%,#f2f0e6 35%,#ece9d8 100%)"></div>
<div class="a " style="left:2px;top:795px;width:1275px;height:1px;background:#f6f5ee"></div>
<div class="a " style="left:6px;top:772px;width:2px;height:2px;background:#b8b4a0"></div>
<div class="a " style="left:7px;top:773px;width:1px;height:1px;background:#8c8874"></div>
<div class="a " style="left:6px;top:776px;width:2px;height:2px;background:#b8b4a0"></div>
<div class="a " style="left:7px;top:777px;width:1px;height:1px;background:#8c8874"></div>
<div class="a " style="left:6px;top:780px;width:2px;height:2px;background:#b8b4a0"></div>
<div class="a " style="left:7px;top:781px;width:1px;height:1px;background:#8c8874"></div>
<div class="a " style="left:6px;top:784px;width:2px;height:2px;background:#b8b4a0"></div>
<div class="a " style="left:7px;top:785px;width:1px;height:1px;background:#8c8874"></div>
<div class="a " style="left:6px;top:788px;width:2px;height:2px;background:#b8b4a0"></div>
<div class="a " style="left:7px;top:789px;width:1px;height:1px;background:#8c8874"></div>
<svg class="a" style="left:15px;top:773px" width="18" height="16" viewBox="0 0 18 16"><g opacity="1"><rect x="4.500" y="1.500" width="9" height="5" fill="#fff" stroke="#88889a"/><rect x="1.500" y="5.500" width="15" height="7" rx="1.500" fill="#c8c8d4" stroke="#6c6c80"/><rect x="4" y="8" width="10" height="2.500" fill="#303040"/><rect x="3.500" y="11.500" width="11" height="3" fill="#e8e8f0" stroke="#88889a"/></g></svg>
<svg class="a" style="left:38px;top:772px" width="19" height="17" viewBox="0 0 19 17"><rect x="8.500" y="1.500" width="9" height="12" fill="#f6f6f7" stroke="#dcdce2"/><g transform="translate(0 5.500) scale(.82 .74)"><rect x="4.500" y="1.500" width="9" height="5" fill="#fff" stroke="#88889a"/><rect x="1.500" y="5.500" width="15" height="7" rx="1.500" fill="#c8c8d4" stroke="#6c6c80"/><rect x="4" y="8" width="10" height="2.500" fill="#303040"/><rect x="3.500" y="11.500" width="11" height="3" fill="#e8e8f0" stroke="#88889a"/></g></svg>
<div class="a " style="left:63px;top:771px;width:1px;height:22px;background:#c5c2a8"></div>
<div class="a " style="left:67px;top:769px;width:24px;height:24px;background:#fff;border:1px solid #7f9db9;border-radius:3px"></div>
<svg class="a" style="left:71px;top:773px" width="16" height="16" viewBox="0 0 16 16"><path d="M4.500 15.500V6.500H1.800L5.500 1.200 9.200 6.500H6.500v9z" fill="#ffb040" stroke="#d87800" stroke-width=".9" stroke-linejoin="round"/><path d="M9.500 4h2M9.500 7h3.500M9.500 10h5M9.500 13h6.500" stroke="#1c8c1c" stroke-width="1.800"/></svg>
<svg class="a" style="left:95px;top:773px" width="16" height="16" viewBox="0 0 16 16"><path d="M2.500 .8v9H-.2L3.500 15.100 7.200 9.800H4.500v-9z" fill="#ffb040" stroke="#d87800" stroke-width=".9" stroke-linejoin="round" transform="translate(1 0)"/><path d="M9 2h7M9 5h5M9 8h3.500M9 11h2" stroke="#3c9c3c" stroke-width="1.800"/></svg>
<div class="a " style="left:118px;top:771px;width:1px;height:22px;background:#c5c2a8"></div>
<svg class="a" style="left:126px;top:773px" width="16" height="16" viewBox="0 0 16 16"><rect x=".5" y=".5" width="15" height="15" fill="#f4f4f6" stroke="#d0d0d6"/><rect x="10" y="1" width="2.500" height="14" fill="#c4c4cc"/><rect x="12.500" y="1" width="2.500" height="14" fill="#fbfbfc"/><path d="M1 2.500h14" stroke="#e0e0e6"/><path d="M2.500 5.500h1M2.500 7.500h1M2.500 9.500h1M2.500 11.500h1" stroke="#555"/><path d="M4.500 5.500h3.500M4.500 7.500h3.500M4.500 9.500h3.500M4.500 11.500h3.500" stroke="#777"/></svg>
<svg class="a" style="left:145px;top:778px" width="5" height="3" viewBox="0 0 5 3"><path d="M0 0h5l-2.500 3z" fill="#000"/></svg>
<svg class="a" style="left:158px;top:772px" width="17" height="17" viewBox="0 0 17 17"><circle cx="8" cy="5" r="3.600" fill="#dcdce2" stroke="#b4b4bc"/><path d="M1.500 15.500q0-6 6.500-6t6.500 6z" fill="#d4d4da" stroke="#b4b4bc"/></svg>
<svg class="a" style="left:176px;top:778px" width="5" height="3" viewBox="0 0 5 3"><path d="M0 0h5l-2.500 3z" fill="#aca899"/></svg>
<div class="a " style="left:188px;top:772px;width:100px;height:18px;background:#fff"></div>
<div class="t " style="left:190px;top:775px;">All</div>
<div class="a " style="left:273px;top:773px;width:13px;height:16px;background:linear-gradient(180deg,#c9d7fb 0%,#bccdf8 60%,#aebff0 100%);border-radius:2px"></div>
<svg class="a" style="left:275px;top:778px" width="9" height="7" viewBox="0 0 9 7"><path d="M1 1.500l3.500 3.500 3.500-3.500" stroke="#4d6185" stroke-width="2" fill="none"/></svg>
<svg class="a" style="left:291px;top:772px" width="17" height="17" viewBox="0 0 17 17"><g transform="translate(0 0) scale(1)"><defs><linearGradient id="fg7" x1="0" x2="1"><stop offset="0" stop-color="#fff"/><stop offset=".45" stop-color="#ececf0"/><stop offset=".7" stop-color="#b8b8c2" stop-opacity=".55"/><stop offset="1" stop-color="#fff"/></linearGradient></defs><path d="M.6 2.600Q8 6 15.400 2.600L9.600 9.300v4.700L6.600 15.600V9.300z" fill="url(#fg7)" stroke="#b8b8c2" stroke-width=".9" stroke-linejoin="round"/><ellipse cx="8" cy="2.600" rx="7.400" ry="1.900" fill="#ececf0" stroke="#b8b8c2" stroke-width=".9"/><ellipse cx="8" cy="2.900" rx="5.400" ry="1" fill="#fff" opacity=".8"/></g><rect x="6.500" y="9.500" width="8" height="4.500" rx="1.800" transform="rotate(-38 10.500 11.700)" fill="#f6f6f8" stroke="#b4b4bc" stroke-width=".9"/></svg>
<svg class="a" style="left:315px;top:785px" width="5" height="3" viewBox="0 0 5 3"><path d="M0 0h5l-2.500 3z" fill="#000"/></svg>
<div class="a " style="left:4px;top:797px;width:1273px;height:15px;background:#aca899"></div>
<div class="t" style="left:7px;top:797px;font-family:'Liberation Serif',serif;font-weight:bold;font-size:13px;line-height:15px;height:15px;letter-spacing:.25px">Task: #18 - 'Task 9'</div>
<div class="a " style="left:3px;top:814px;width:1256px;height:98px;background:#fff;border:1px solid #7f9db9;border-top:none;border-left:2px solid #6f8fb0"></div>
<div class="a " style="left:3px;top:814px;width:1256px;height:1px;background:#f6f5ee"></div>
<div class="a " style="left:4px;top:815px;width:1254px;height:1px;background:#716f64"></div>
<div class="a " style="left:4px;top:816px;width:15px;height:79px;background:#ece9d8"></div>
<div class="a " style="left:19px;top:816px;width:1px;height:79px;background:#aca899"></div>
<div class="a " style="left:1257px;top:816px;width:1px;height:79px;background:#aca899"></div>
<div class="a " style="left:19px;top:822px;width:1239px;height:1px;background:#aca899"></div>
<div class="a " style="left:19px;top:840px;width:1239px;height:1px;background:#aca899"></div>
<div class="a " style="left:19px;top:858px;width:1239px;height:1px;background:#aca899"></div>
<div class="a " style="left:19px;top:876px;width:1239px;height:1px;background:#aca899"></div>
<div class="a " style="left:19px;top:894px;width:1239px;height:1px;background:#aca899"></div>
<div class="a" style="left:20px;top:816px;width:1230px;height:6px;overflow:hidden"><div class="t" style="left:2px;top:-8px">Start time: - -&gt; 12/14/2010</div></div>
<div class="t " style="left:22px;top:826px;letter-spacing:.05px">Finish time: - -&gt; 12/21/2010</div>
<div class="t " style="left:22px;top:844px;letter-spacing:.05px">Due date: 10/28/2010 -&gt; 12/28/2010</div>
<div class="t " style="left:22px;top:862px;letter-spacing:-0.16px;">New Assignments: Kevin Turner</div>
<div class="t " style="left:22px;top:880px;letter-spacing:-0.21px;">Removed Assignments: David Elliot</div>
<div class="a " style="left:1260px;top:816px;width:17px;height:96px;background:linear-gradient(90deg,#eeede5 0%,#f8f8f4 30%,#fefefc 70%,#fff 100%)"></div>
<div class="a " style="left:1260px;top:816px;width:15px;height:17px;background:#fff;border-radius:3px"></div>
<div class="a " style="left:1261px;top:817px;width:13px;height:14px;background:linear-gradient(135deg,#d2defc 0%,#c0d0fa 45%,#aec2f6 100%);border-radius:2px"></div>
<div class="a " style="left:1261px;top:832px;width:13px;height:1px;background:#b4c8f6;border-radius:0 0 2px 2px"></div>
<svg class="a" style="left:1263px;top:820px" width="9" height="7" viewBox="0 0 9 7"><path d="M1 5.500l3.500-3.500 3.500 3.500" stroke="#4d6185" stroke-width="2" fill="none"/></svg>
<div class="a " style="left:1260px;top:876px;width:15px;height:19px;background:#fff;border-radius:3px"></div>
<div class="a " style="left:1261px;top:877px;width:13px;height:16px;background:linear-gradient(90deg,#cbd9fc 0%,#c2d2fb 40%,#b3c5f5 100%);border-radius:2px"></div>
<div class="a " style="left:1261px;top:894px;width:13px;height:1px;background:#b4c8f6;border-radius:0 0 2px 2px"></div>
<div class="a " style="left:1265px;top:881px;width:5px;height:1px;background:#eef3fe"></div>
<div class="a " style="left:1266px;top:882px;width:5px;height:1px;background:#8cb0f8"></div>
<div class="a " style="left:1265px;top:883px;width:5px;height:1px;background:#eef3fe"></div>
<div class="a " style="left:1266px;top:884px;width:5px;height:1px;background:#8cb0f8"></div>
<div class="a " style="left:1265px;top:885px;width:5px;height:1px;background:#eef3fe"></div>
<div class="a " style="left:1266px;top:886px;width:5px;height:1px;background:#8cb0f8"></div>
<div class="a " style="left:1265px;top:887px;width:5px;height:1px;background:#eef3fe"></div>
<div class="a " style="left:1266px;top:888px;width:5px;height:1px;background:#8cb0f8"></div>
<div class="a " style="left:1260px;top:896px;width:15px;height:17px;background:#fff;border-radius:3px"></div>
<div class="a " style="left:1261px;top:897px;width:13px;height:14px;background:linear-gradient(135deg,#d2defc 0%,#c0d0fa 45%,#aec2f6 100%);border-radius:2px"></div>
<div class="a " style="left:1261px;top:912px;width:13px;height:1px;background:#b4c8f6;border-radius:0 0 2px 2px"></div>
<svg class="a" style="left:1263px;top:900px" width="9" height="7" viewBox="0 0 9 7"><path d="M1 1.500l3.500 3.500 3.500-3.500" stroke="#4d6185" stroke-width="2" fill="none"/></svg>
<div class="a " style="left:0px;top:912px;width:1280px;height:6px;background:#f4f3ee"></div>
<div class="a " style="left:2px;top:912px;width:1275px;height:1px;background:#fff"></div>
<div class="a " style="left:0px;top:919px;width:1280px;height:25px;background:linear-gradient(180deg,#f6f5f0,#f1f0e8)"></div>
<div class="a " style="left:2px;top:918px;width:1276px;height:1px;background:#91a7b4"></div>
<div class="a " style="left:7px;top:920px;width:58px;height:22px;background:linear-gradient(180deg,#ebeae0 0%,#f8f8f4 40%,#ffffff 100%);border:1px solid #91a7b4;border-top:none;border-radius:0 0 3px 3px"></div>
<svg class="a" style="left:10px;top:922px" width="17" height="17" viewBox="0 0 17 17"><rect x=".5" y="4.500" width="12" height="11.500" fill="#fdf8c4" stroke="#d8cc84"/><path d="M2.500 14l4-4.500" stroke="#7c84a8" stroke-width="1.200"/><path d="M5.500 10.500l3.500-4 3 2.500-3.500 3.500z" fill="#b4bcdc" stroke="#7c84ac" stroke-width=".8"/><ellipse cx="11.800" cy="4.600" rx="4.200" ry="3.400" transform="rotate(-40 11.800 4.600)" fill="#d8dcf2" stroke="#7c84ac" stroke-width=".9"/><ellipse cx="12.600" cy="3.600" rx="1.800" ry="1.200" transform="rotate(-40 12.600 3.600)" fill="#fff"/></svg>
<div class="t " style="left:30px;top:924px;">Notes</div>
<div class="a " style="left:67px;top:920px;width:79px;height:22px;background:linear-gradient(180deg,#ebeae0 0%,#f8f8f4 40%,#ffffff 100%);border:1px solid #91a7b4;border-top:none;border-radius:0 0 3px 3px"></div>
<svg class="a" style="left:70px;top:922px" width="17" height="17" viewBox="0 0 17 17"><rect x="6.500" y=".5" width="9.500" height="13" fill="#f2f2f5" stroke="#c0c0c8"/><path d="M9 3.500h5.500M9 5.500h4.500M9 7.500h3" stroke="#444" stroke-width="1"/><circle cx="3.800" cy="3.800" r="3.200" fill="#c0c8ec" stroke="#7c88b8" stroke-width=".9"/><circle cx="3" cy="3" r="1.200" fill="#fff" opacity=".8"/><path d="M.5 15.500v-4.500q0-3 3.300-3t3.300 3v4.500z" fill="#a8b4e0" stroke="#7c88b8" stroke-width=".9"/></svg>
<div class="t " style="left:90px;top:924px;letter-spacing:-0.42px;">Comments</div>
<div class="a " style="left:237px;top:920px;width:89px;height:22px;background:linear-gradient(180deg,#ebeae0 0%,#f8f8f4 40%,#ffffff 100%);border:1px solid #91a7b4;border-top:none;border-radius:0 0 3px 3px"></div>
<svg class="a" style="left:240px;top:922px" width="17" height="17" viewBox="0 0 17 17"><path d="M6.500 8V4q0-3 2.700-3t2.700 3v8" stroke="#8088a8" stroke-width="1.300" fill="none"/><path d="M.8 7.300q0-.8.800-.8h3l1.200 1.200h6.400q.8 0 .8.800v6.200q0 .8-.8.800H1.600q-.8 0-.8-.8z" fill="#fbd35a" stroke="#e2ae38" stroke-width=".8"/><path d="M9.200 6v5" stroke="#8088a8" stroke-width="1.300"/><ellipse cx="9" cy="16" rx="7" ry="1" fill="#c8c4b0" opacity=".6"/></svg>
<div class="t " style="left:260px;top:924px;">Attachments</div>
<div class="a " style="left:329px;top:920px;width:132px;height:22px;background:linear-gradient(180deg,#ebeae0 0%,#f8f8f4 40%,#ffffff 100%);border:1px solid #91a7b4;border-top:none;border-radius:0 0 3px 3px"></div>
<svg class="a" style="left:332px;top:922px" width="17" height="17" viewBox="0 0 17 17"><circle cx="7" cy="4.300" r="3.600" fill="#c4cce8" stroke="#7c88b8" stroke-width=".9"/><circle cx="6" cy="3.300" r="1.400" fill="#fff" opacity=".8"/><path d="M1 15.500v-3.500q0-3.500 6-3.500t6 3.500v3.500z" fill="#a8b4e0" stroke="#7c88b8" stroke-width=".9"/></svg>
<div class="t " style="left:352px;top:924px;letter-spacing:-0.18px;">Resource Assignment</div>
<div class="a " style="left:148px;top:918px;width:87px;height:25px;background:#fcfcfa;border:1px solid #919b9c;border-top:none;border-radius:0 0 3px 3px"></div>
<div class="a " style="left:148px;top:940px;width:87px;height:3px;background:linear-gradient(180deg,#ffc73c,#e68b2c);border-radius:0 0 3px 3px"></div>
<svg class="a" style="left:151px;top:922px" width="17" height="17" viewBox="0 0 17 17"><path d="M8.500 1h7.500M8.500 15h7.500" stroke="#8890b0" stroke-width="1.600"/><path d="M9.500 2q0 4 2.700 6-2.700 2-2.700 6h5.400q0-4-2.700-6 2.700-2 2.700-6z" fill="#eef0fa" stroke="#9098b8" stroke-width=".9"/><path d="M11 13.500l1.200-2 1.200 2z" fill="#b0b8d8"/><circle cx="5.5" cy="10.8" r="5.2" fill="#e8e8f2" stroke="#b0b0c6" stroke-width=".8"/><circle cx="5.5" cy="10.8" r="3.5" fill="#0c0c10"/><path d="M5.5 8.3V10.9H7.7" stroke="#fff" stroke-width="1.1" fill="none"/></svg>
<div class="t " style="left:171px;top:924px;">Task history</div>
<div class="a " style="left:0px;top:944px;width:1280px;height:1px;background:#aca899"></div>
<div class="a " style="left:0px;top:945px;width:1280px;height:1px;background:#fff"></div>
<div class="a " style="left:0px;top:946px;width:1280px;height:27px;background:linear-gradient(180deg,#fbfbf9 0%,#f6f5f0 60%,#eeede4 100%)"></div>
<div class="a " style="left:4px;top:948px;width:61px;height:24px;background:linear-gradient(180deg,#ffffff 0%,#f8f8f4 60%,#efeee4 100%);border:1px solid #91a7b4;border-bottom:none;border-radius:3px 3px 0 0"></div>
<svg class="a" style="left:8px;top:952px" width="17" height="17" viewBox="0 0 17 17"><rect x=".6" y="2" width="15.600" height="12.600" fill="#fff" stroke="#2254d8" stroke-width="1.200"/><rect x=".6" y="2" width="15.600" height="2.800" fill="#3a70ec" stroke="#2254d8" stroke-width="1.200"/><rect x="11" y="2.800" width="1.200" height="1.200" fill="#fff"/><rect x="13.200" y="2.800" width="1.200" height="1.200" fill="#fff"/><ellipse cx="8.400" cy="9.800" rx="5.600" ry="3.600" fill="#e84838"/><path d="M8.400 9.800l-1-3.500a5.600 3.600 0 0 1 6.600 3.500z" fill="#38c038"/><path d="M8.400 9.800h5.600a5.600 3.600 0 0 1-4.600 3.500z" fill="#f0b828"/><ellipse cx="6.500" cy="8.400" rx="2.200" ry="1" fill="#fff" opacity=".5"/></svg>
<div class="t " style="left:30px;top:954px;">Charts</div>
<div class="a " style="left:70px;top:948px;width:23px;height:24px;background:linear-gradient(180deg,#ffffff 0%,#f8f8f4 60%,#efeee4 100%);border:1px solid #91a7b4;border-bottom:none;border-radius:3px 3px 0 0"></div>
<svg class="a" style="left:74px;top:952px" width="17" height="17" viewBox="0 0 17 17"><path d="M1 7.500l7.500-6.500 7.500 6.500z" fill="#7c8cd4" stroke="#98a4d0" stroke-width=".7"/><path d="M4 6.500l4.500-3.800 4.500 3.800v5h-9z" fill="#fdf8c0" stroke="#e0d890" stroke-width=".6"/><path d="M1 7.500l7.500 4.500 7.500-4.500v8.500h-15z" fill="#eceff9" stroke="#a0acd4" stroke-width=".8"/><path d="M1 16l6-5.200M16 16l-6-5.200" stroke="#b0b8dc" stroke-width=".8"/></svg>
<div class="a " style="left:93px;top:948px;width:89px;height:24px;background:linear-gradient(180deg,#ffffff 0%,#f8f8f4 60%,#efeee4 100%);border:1px solid #91a7b4;border-bottom:none;border-radius:3px 3px 0 0"></div>
<svg class="a" style="left:97px;top:952px" width="17" height="17" viewBox="0 0 17 17"><path d="M10 7l-8.500 8.500M3 14l1.800 1.800M5 12l1.800 1.800M7 10l1.400 1.400" stroke="#98a0cc" stroke-width="1.900"/><path d="M10.200 6.800l-8.300 8.300" stroke="#e0e4f4" stroke-width=".7"/><circle cx="12" cy="4.600" r="4" fill="#d0d4ec" stroke="#8088b4" stroke-width="1"/><circle cx="13.200" cy="3.400" r="1.300" fill="#fff" stroke="#8088b4" stroke-width=".7"/></svg>
<div class="t " style="left:120px;top:954px;letter-spacing:-0.41px;">Permissions</div>
<div class="a " style="left:0px;top:972px;width:1280px;height:1px;background:#aca899"></div>
<div class="a " style="left:0px;top:973px;width:1280px;height:21px;background:linear-gradient(180deg,#dedbc8 0%,#e8e5d3 15%,#ece9d8 40%)"></div>
<div class="a " style="left:4px;top:980px;width:17px;height:8px;background:linear-gradient(180deg,#c8c8c8,#888);border:1px solid #666;border-left-width:2px"></div>
<div class="a " style="left:28px;top:976px;width:1px;height:16px;background:#c5c2b0"></div>
<div class="a " style="left:29px;top:976px;width:1px;height:16px;background:#fff"></div>
<div class="a " style="left:235px;top:976px;width:102px;height:20px;background:#fff;border:1px solid #6a6a6a;border-radius:3px"></div>
<div class="a " style="left:339px;top:977px;width:1px;height:16px;background:#c5c2b0"></div>
<div class="a " style="left:340px;top:977px;width:1px;height:16px;background:#fff"></div>
<div class="t" style="left:235px;width:102px;text-align:center;top:978px;">0 %</div>
<div class="a " style="left:403px;top:976px;width:1px;height:16px;background:#c5c2b0"></div>
<div class="a " style="left:404px;top:976px;width:1px;height:16px;background:#fff"></div>
</div>
</body></html>
